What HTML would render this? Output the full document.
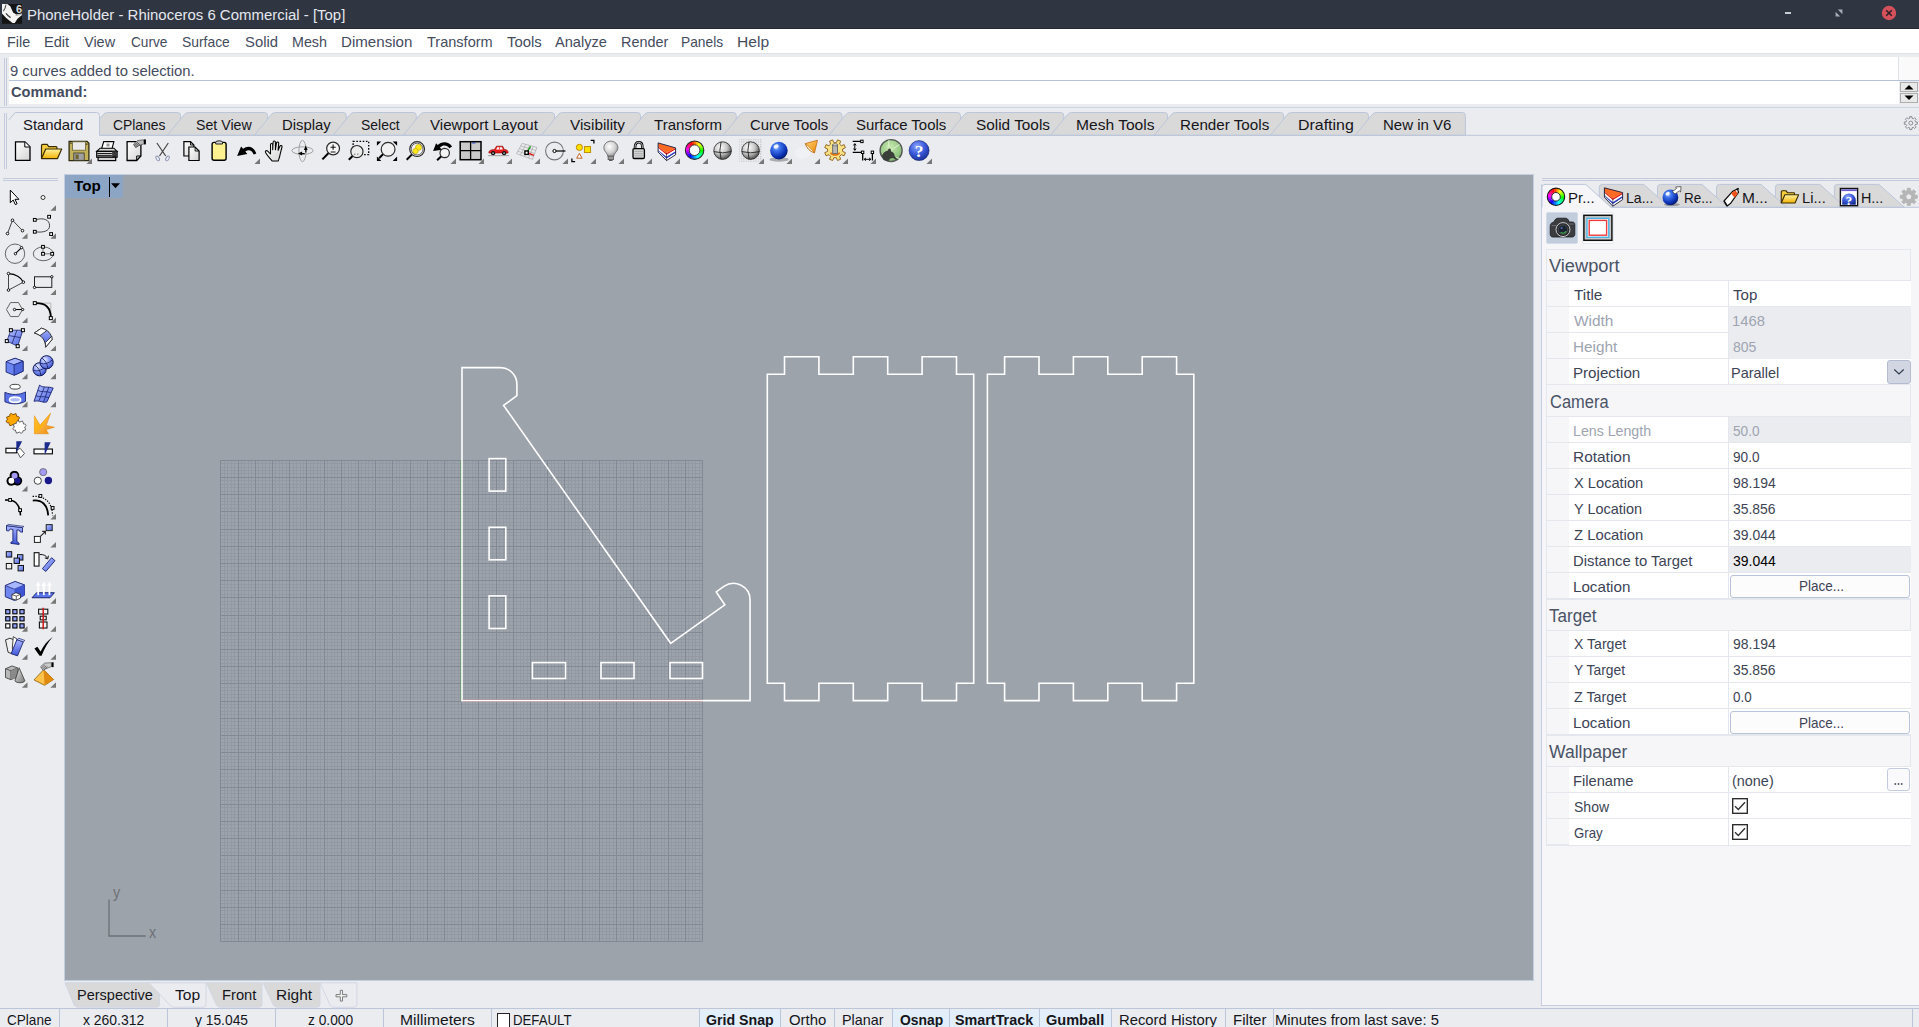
<!DOCTYPE html>
<html><head><meta charset="utf-8"><title>PhoneHolder - Rhinoceros 6 Commercial - [Top]</title>
<style>
*{margin:0;padding:0;box-sizing:border-box}
html,body{width:1919px;height:1027px;overflow:hidden;background:#ebecf0;font-family:"Liberation Sans",sans-serif;}
.a{position:absolute}
.t{position:absolute;white-space:pre;transform-origin:0 0;line-height:1;}
svg{position:absolute;overflow:visible}
</style></head>
<body>
<!-- chrome -->
<div class="a" style="left:0px;top:0px;width:1919px;height:29px;background:#2f3541;"></div>
<div class="a" style="left:0px;top:28px;width:1919px;height:1px;background:#232834;"></div>
<div class="a" style="left:1785px;top:12px;width:6px;height:2px;background:#c9ccd3;"></div>
<svg style="left:1835px;top:9px" width="8" height="8" viewBox="0 0 8 8"><path d="M2.8 0.6H7.4V5.2Z M0.6 2.8V7.4H5.2Z" fill="#a9adb6"/></svg>
<svg style="left:1881px;top:5px" width="16" height="16" viewBox="0 0 16 16"><circle cx="8" cy="8" r="7.2" fill="#d4515c"/><path d="M5.2 5.2L10.8 10.8M10.8 5.2L5.2 10.8" stroke="#2a1d26" stroke-width="1.5" fill="none"/></svg>
<svg style="left:2px;top:4px" width="20" height="20" viewBox="0 0 20 20"><rect width="20" height="19.8" fill="#141414"/><path d="M0 0H5.2L8.3 2.2L11.1 8.4L14.2 10.6L20 9.5V10.9L15.5 14.7L12.7 19.1H10.5L4.2 14.1L0 9.6Z" fill="#f4f4f4"/><path d="M4 0.6C3.6 3.4 2.6 5.6 1.4 7.2" stroke="#555" stroke-width="1.1" fill="none"/><path d="M4 9.4C5.4 11.4 7.2 12.8 8.6 13.6" stroke="#444" stroke-width="1.3" fill="none"/><path d="M13.6 11.6L19.8 10.2" stroke="#999" stroke-width="0.8"/><text x="13.9" y="9.3" font-size="11" font-weight="700" fill="#dcdcdc" font-family="Liberation Sans, sans-serif">6</text></svg>
<div class="a" style="left:0px;top:29px;width:1919px;height:24px;background:#fff;"></div>
<div class="a" style="left:0px;top:53px;width:1919px;height:1px;background:#dfe2e7;"></div>
<div class="a" style="left:4px;top:58px;width:1px;height:48px;background:#c3cbdd;"></div>
<div class="a" style="left:6px;top:58px;width:1px;height:48px;background:#c3cbdd;"></div>
<div class="a" style="left:9px;top:57px;width:1890px;height:23px;background:#fff;"></div>
<div class="a" style="left:1899px;top:57px;width:20px;height:23px;background:#fafafb;"></div>
<div class="a" style="left:1898px;top:57px;width:1px;height:23px;background:#dfe2ea;"></div>
<div class="a" style="left:9px;top:80px;width:1910px;height:1px;background:#b7c1d9;"></div>
<div class="a" style="left:9px;top:81px;width:1890px;height:23px;background:#fff;"></div>
<svg style="left:1900px;top:82px" width="18" height="10" viewBox="0 0 18 10"><rect x="0.5" y="0.5" width="17" height="9" fill="#e9e9e9" stroke="#adadad"/><path d="M4.5 7.5L9 3L13.5 7.5Z" fill="#000"/></svg>
<svg style="left:1900px;top:93px" width="18" height="10" viewBox="0 0 18 10"><rect x="0.5" y="0.5" width="17" height="9" fill="#e9e9e9" stroke="#adadad"/><path d="M4.5 2.5L9 7L13.5 2.5Z" fill="#000"/></svg>
<div class="a" style="left:0px;top:107px;width:1919px;height:1px;background:#cdd4e4;"></div>
<svg style="left:0;top:0" width="1919" height="170" viewBox="0 0 1919 170" fill="none"><path d="M86.30 135.30 L103.00 114.90 Q104.80 112.50 107.50 112.50 L177.60 112.50 Q180.60 112.50 180.60 115.50 L180.60 135.30 Z" fill="#d9d9d9" stroke="#bcc6db" stroke-width="1"/><path d="M167.40 135.30 L184.10 114.90 Q185.90 112.50 188.60 112.50 L264.50 112.50 Q267.50 112.50 267.50 115.50 L267.50 135.30 Z" fill="#d9d9d9" stroke="#bcc6db" stroke-width="1"/><path d="M254.30 135.30 L271.00 114.90 Q272.80 112.50 275.50 112.50 L343.25 112.50 Q346.25 112.50 346.25 115.50 L346.25 135.30 Z" fill="#d9d9d9" stroke="#bcc6db" stroke-width="1"/><path d="M333.05 135.30 L349.75 114.90 Q351.55 112.50 354.25 112.50 L413.25 112.50 Q416.25 112.50 416.25 115.50 L416.25 135.30 Z" fill="#d9d9d9" stroke="#bcc6db" stroke-width="1"/><path d="M403.05 135.30 L419.75 114.90 Q421.55 112.50 424.25 112.50 L551.50 112.50 Q554.50 112.50 554.50 115.50 L554.50 135.30 Z" fill="#d9d9d9" stroke="#bcc6db" stroke-width="1"/><path d="M541.30 135.30 L558.00 114.90 Q559.80 112.50 562.50 112.50 L637.50 112.50 Q640.50 112.50 640.50 115.50 L640.50 135.30 Z" fill="#d9d9d9" stroke="#bcc6db" stroke-width="1"/><path d="M627.30 135.30 L644.00 114.90 Q645.80 112.50 648.50 112.50 L733.25 112.50 Q736.25 112.50 736.25 115.50 L736.25 135.30 Z" fill="#d9d9d9" stroke="#bcc6db" stroke-width="1"/><path d="M723.05 135.30 L739.75 114.90 Q741.55 112.50 744.25 112.50 L839.00 112.50 Q842.00 112.50 842.00 115.50 L842.00 135.30 Z" fill="#d9d9d9" stroke="#bcc6db" stroke-width="1"/><path d="M828.80 135.30 L845.50 114.90 Q847.30 112.50 850.00 112.50 L957.50 112.50 Q960.50 112.50 960.50 115.50 L960.50 135.30 Z" fill="#d9d9d9" stroke="#bcc6db" stroke-width="1"/><path d="M947.30 135.30 L964.00 114.90 Q965.80 112.50 968.50 112.50 L1060.75 112.50 Q1063.75 112.50 1063.75 115.50 L1063.75 135.30 Z" fill="#d9d9d9" stroke="#bcc6db" stroke-width="1"/><path d="M1050.55 135.30 L1067.25 114.90 Q1069.05 112.50 1071.75 112.50 L1164.50 112.50 Q1167.50 112.50 1167.50 115.50 L1167.50 135.30 Z" fill="#d9d9d9" stroke="#bcc6db" stroke-width="1"/><path d="M1154.30 135.30 L1171.00 114.90 Q1172.80 112.50 1175.50 112.50 L1280.60 112.50 Q1283.60 112.50 1283.60 115.50 L1283.60 135.30 Z" fill="#d9d9d9" stroke="#bcc6db" stroke-width="1"/><path d="M1270.40 135.30 L1287.10 114.90 Q1288.90 112.50 1291.60 112.50 L1365.40 112.50 Q1368.40 112.50 1368.40 115.50 L1368.40 135.30 Z" fill="#d9d9d9" stroke="#bcc6db" stroke-width="1"/><path d="M1355.20 135.30 L1371.90 114.90 Q1373.70 112.50 1376.40 112.50 L1462.40 112.50 Q1465.40 112.50 1465.40 115.50 L1465.40 135.30 Z" fill="#d9d9d9" stroke="#bcc6db" stroke-width="1"/><path d="M99.5 135.30 H1919" stroke="#bcc6db"/><path d="M9 119.8 L15.2 112.50 H96.5 Q99.5 112.50 99.5 115.50 V135.90 H9Z" fill="#ebecf0"/><path d="M9 119.8 L15.2 112.50 H96.5 Q99.5 112.50 99.5 115.50 V135.30" stroke="#bcc6db"/><path d="M4.5 113V169M6.5 113V169" stroke="#c3cbdd"/><path d="M1917.30 121.97L1917.30 124.23L1915.55 124.24L1914.96 125.65L1916.20 126.90L1914.60 128.50L1913.35 127.26L1911.94 127.85L1911.93 129.60L1909.67 129.60L1909.66 127.85L1908.25 127.26L1907.00 128.50L1905.40 126.90L1906.64 125.65L1906.05 124.24L1904.30 124.23L1904.30 121.97L1906.05 121.96L1906.64 120.55L1905.40 119.30L1907.00 117.70L1908.25 118.94L1909.66 118.35L1909.67 116.60L1911.93 116.60L1911.94 118.35L1913.35 118.94L1914.60 117.70L1916.20 119.30L1914.96 120.55L1915.55 121.96Z" fill="none" stroke="#8a8e96" stroke-width="1" stroke-linejoin="round"/><circle cx="1910.80" cy="123.10" r="1.98" fill="none" stroke="#8a8e96"/></svg>
<div class="a" style="left:3px;top:178px;width:55px;height:1px;background:#c3cbdd;"></div>
<div class="a" style="left:3px;top:180px;width:55px;height:1px;background:#c3cbdd;"></div>
<svg style="left:0;top:0" width="1919" height="1027" viewBox="0 0 1919 1027" fill="none"><path d="M65.00 982.80 L74.00 1004.70 Q75.50 1007.20 78.00 1007.20 H156.50 Q159.50 1007.20 159.50 1004.20 V982.80 Z" fill="#d9d9d9" stroke="#d2d7e4"/><path d="M206.40 982.80 L216.30 1004.70 Q217.80 1007.20 220.30 1007.20 H259.00 Q262.00 1007.20 262.00 1004.20 V982.80 Z" fill="#d9d9d9" stroke="#d2d7e4"/><path d="M263.00 982.80 L273.20 1004.70 Q274.70 1007.20 277.20 1007.20 H317.00 Q320.00 1007.20 320.00 1004.20 V982.80 Z" fill="#d9d9d9" stroke="#d2d7e4"/><path d="M320.00 982.80 L329.90 1004.70 Q331.40 1007.20 333.90 1007.20 H353.90 Q356.90 1007.20 356.90 1004.20 V982.80 Z" fill="#ebecf0" stroke="#d2d7e4"/><path d="M149.00 982.80 L169.50 1004.70 Q171.00 1007.20 173.50 1007.20 H203.00 Q206.00 1007.20 206.00 1004.20 V982.80 Z" fill="#ebecf0" stroke="#d2d7e4"/><path d="M336 994.6h4.3v-4.3h2.2v4.3h4.3v2.2h-4.3v4.3h-2.2v-4.3h-4.3z" stroke="#707070" stroke-width="0.9" fill="#f6f6f6"/></svg>
<div class="a" style="left:0px;top:1008px;width:1919px;height:1px;background:#bcc6db;"></div>
<div class="a" style="left:699.5px;top:1009.5px;width:80.5px;height:18px;background:#e2eefa;"></div>
<div class="a" style="left:892px;top:1009.5px;width:57.5px;height:18px;background:#e2eefa;"></div>
<div class="a" style="left:949.5px;top:1009.5px;width:90px;height:18px;background:#e2eefa;"></div>
<div class="a" style="left:1039.5px;top:1009.5px;width:71.75px;height:18px;background:#e2eefa;"></div>
<div class="a" style="left:59.3px;top:1009px;width:1px;height:18px;background:#bcc6db;"></div>
<div class="a" style="left:166.9px;top:1009px;width:1px;height:18px;background:#bcc6db;"></div>
<div class="a" style="left:274.6px;top:1009px;width:1px;height:18px;background:#bcc6db;"></div>
<div class="a" style="left:382.6px;top:1009px;width:1px;height:18px;background:#bcc6db;"></div>
<div class="a" style="left:490.75px;top:1009px;width:1px;height:18px;background:#bcc6db;"></div>
<div class="a" style="left:699px;top:1009px;width:1px;height:18px;background:#bcc6db;"></div>
<div class="a" style="left:779.5px;top:1009px;width:1px;height:18px;background:#bcc6db;"></div>
<div class="a" style="left:833.7px;top:1009px;width:1px;height:18px;background:#bcc6db;"></div>
<div class="a" style="left:891.5px;top:1009px;width:1px;height:18px;background:#bcc6db;"></div>
<div class="a" style="left:949px;top:1009px;width:1px;height:18px;background:#bcc6db;"></div>
<div class="a" style="left:1039px;top:1009px;width:1px;height:18px;background:#bcc6db;"></div>
<div class="a" style="left:1110.75px;top:1009px;width:1px;height:18px;background:#bcc6db;"></div>
<div class="a" style="left:1224.5px;top:1009px;width:1px;height:18px;background:#bcc6db;"></div>
<div class="a" style="left:1273.25px;top:1009px;width:1px;height:18px;background:#bcc6db;"></div>
<div class="a" style="left:1912px;top:1009px;width:1px;height:18px;background:#bcc6db;"></div>
<div class="a" style="left:496.5px;top:1013px;width:13px;height:14px;background:#fff;border:1px solid #222;border-bottom:none"></div>
<!-- viewport -->
<div class="a" style="left:64px;top:174px;width:1470px;height:807px;background:#c4cee1;"></div>
<div class="a" style="left:65px;top:175px;width:1468px;height:805px;background:#9da3ab;"></div>
<svg style="left:0;top:0" width="1919" height="1027" viewBox="0 0 1919 1027" fill="none"><path d="M224.50 460.20V941.80M220.90 463.50H702.60M227.50 460.20V941.80M220.90 467.50H702.60M231.50 460.20V941.80M220.90 470.50H702.60M234.50 460.20V941.80M220.90 473.50H702.60M241.50 460.20V941.80M220.90 480.50H702.60M244.50 460.20V941.80M220.90 484.50H702.60M248.50 460.20V941.80M220.90 487.50H702.60M251.50 460.20V941.80M220.90 491.50H702.60M258.50 460.20V941.80M220.90 498.50H702.60M262.50 460.20V941.80M220.90 501.50H702.60M265.50 460.20V941.80M220.90 504.50H702.60M269.50 460.20V941.80M220.90 508.50H702.60M275.50 460.20V941.80M220.90 515.50H702.60M279.50 460.20V941.80M220.90 518.50H702.60M282.50 460.20V941.80M220.90 522.50H702.60M286.50 460.20V941.80M220.90 525.50H702.60M293.50 460.20V941.80M220.90 532.50H702.60M296.50 460.20V941.80M220.90 535.50H702.60M300.50 460.20V941.80M220.90 539.50H702.60M303.50 460.20V941.80M220.90 542.50H702.60M310.50 460.20V941.80M220.90 549.50H702.60M313.50 460.20V941.80M220.90 553.50H702.60M317.50 460.20V941.80M220.90 556.50H702.60M320.50 460.20V941.80M220.90 559.50H702.60M327.50 460.20V941.80M220.90 566.50H702.60M331.50 460.20V941.80M220.90 570.50H702.60M334.50 460.20V941.80M220.90 573.50H702.60M337.50 460.20V941.80M220.90 577.50H702.60M344.50 460.20V941.80M220.90 584.50H702.60M348.50 460.20V941.80M220.90 587.50H702.60M351.50 460.20V941.80M220.90 590.50H702.60M355.50 460.20V941.80M220.90 594.50H702.60M361.50 460.20V941.80M220.90 601.50H702.60M365.50 460.20V941.80M220.90 604.50H702.60M368.50 460.20V941.80M220.90 608.50H702.60M372.50 460.20V941.80M220.90 611.50H702.60M379.50 460.20V941.80M220.90 618.50H702.60M382.50 460.20V941.80M220.90 621.50H702.60M386.50 460.20V941.80M220.90 625.50H702.60M389.50 460.20V941.80M220.90 628.50H702.60M396.50 460.20V941.80M220.90 635.50H702.60M399.50 460.20V941.80M220.90 639.50H702.60M403.50 460.20V941.80M220.90 642.50H702.60M406.50 460.20V941.80M220.90 645.50H702.60M413.50 460.20V941.80M220.90 652.50H702.60M417.50 460.20V941.80M220.90 656.50H702.60M420.50 460.20V941.80M220.90 659.50H702.60M423.50 460.20V941.80M220.90 663.50H702.60M430.50 460.20V941.80M220.90 670.50H702.60M434.50 460.20V941.80M220.90 673.50H702.60M437.50 460.20V941.80M220.90 676.50H702.60M441.50 460.20V941.80M220.90 680.50H702.60M447.50 460.20V941.80M220.90 687.50H702.60M451.50 460.20V941.80M220.90 690.50H702.60M454.50 460.20V941.80M220.90 694.50H702.60M458.50 460.20V941.80M220.90 697.50H702.60M465.50 460.20V941.80M220.90 704.50H702.60M468.50 460.20V941.80M220.90 707.50H702.60M472.50 460.20V941.80M220.90 711.50H702.60M475.50 460.20V941.80M220.90 714.50H702.60M482.50 460.20V941.80M220.90 721.50H702.60M485.50 460.20V941.80M220.90 725.50H702.60M489.50 460.20V941.80M220.90 728.50H702.60M492.50 460.20V941.80M220.90 731.50H702.60M499.50 460.20V941.80M220.90 738.50H702.60M503.50 460.20V941.80M220.90 742.50H702.60M506.50 460.20V941.80M220.90 745.50H702.60M509.50 460.20V941.80M220.90 749.50H702.60M516.50 460.20V941.80M220.90 756.50H702.60M520.50 460.20V941.80M220.90 759.50H702.60M523.50 460.20V941.80M220.90 762.50H702.60M527.50 460.20V941.80M220.90 766.50H702.60M534.50 460.20V941.80M220.90 773.50H702.60M537.50 460.20V941.80M220.90 776.50H702.60M540.50 460.20V941.80M220.90 780.50H702.60M544.50 460.20V941.80M220.90 783.50H702.60M551.50 460.20V941.80M220.90 790.50H702.60M554.50 460.20V941.80M220.90 793.50H702.60M558.50 460.20V941.80M220.90 797.50H702.60M561.50 460.20V941.80M220.90 800.50H702.60M568.50 460.20V941.80M220.90 807.50H702.60M571.50 460.20V941.80M220.90 811.50H702.60M575.50 460.20V941.80M220.90 814.50H702.60M578.50 460.20V941.80M220.90 817.50H702.60M585.50 460.20V941.80M220.90 824.50H702.60M589.50 460.20V941.80M220.90 828.50H702.60M592.50 460.20V941.80M220.90 831.50H702.60M595.50 460.20V941.80M220.90 835.50H702.60M602.50 460.20V941.80M220.90 842.50H702.60M606.50 460.20V941.80M220.90 845.50H702.60M609.50 460.20V941.80M220.90 848.50H702.60M613.50 460.20V941.80M220.90 852.50H702.60M620.50 460.20V941.80M220.90 859.50H702.60M623.50 460.20V941.80M220.90 862.50H702.60M626.50 460.20V941.80M220.90 866.50H702.60M630.50 460.20V941.80M220.90 869.50H702.60M637.50 460.20V941.80M220.90 876.50H702.60M640.50 460.20V941.80M220.90 879.50H702.60M644.50 460.20V941.80M220.90 883.50H702.60M647.50 460.20V941.80M220.90 886.50H702.60M654.50 460.20V941.80M220.90 893.50H702.60M657.50 460.20V941.80M220.90 897.50H702.60M661.50 460.20V941.80M220.90 900.50H702.60M664.50 460.20V941.80M220.90 903.50H702.60M671.50 460.20V941.80M220.90 910.50H702.60M675.50 460.20V941.80M220.90 914.50H702.60M678.50 460.20V941.80M220.90 917.50H702.60M681.50 460.20V941.80M220.90 921.50H702.60M688.50 460.20V941.80M220.90 928.50H702.60M692.50 460.20V941.80M220.90 931.50H702.60M695.50 460.20V941.80M220.90 934.50H702.60M699.50 460.20V941.80M220.90 938.50H702.60" stroke="#9399a3" stroke-width="1"/><path d="M220.50 460.20V941.80M220.90 460.50H702.60M238.50 460.20V941.80M220.90 477.50H702.60M255.50 460.20V941.80M220.90 494.50H702.60M272.50 460.20V941.80M220.90 511.50H702.60M289.50 460.20V941.80M220.90 529.50H702.60M306.50 460.20V941.80M220.90 546.50H702.60M324.50 460.20V941.80M220.90 563.50H702.60M341.50 460.20V941.80M220.90 580.50H702.60M358.50 460.20V941.80M220.90 597.50H702.60M375.50 460.20V941.80M220.90 615.50H702.60M392.50 460.20V941.80M220.90 632.50H702.60M410.50 460.20V941.80M220.90 649.50H702.60M427.50 460.20V941.80M220.90 666.50H702.60M444.50 460.20V941.80M220.90 683.50H702.60M461.50 460.20V941.80M220.90 701.50H702.60M478.50 460.20V941.80M220.90 718.50H702.60M496.50 460.20V941.80M220.90 735.50H702.60M513.50 460.20V941.80M220.90 752.50H702.60M530.50 460.20V941.80M220.90 769.50H702.60M547.50 460.20V941.80M220.90 787.50H702.60M564.50 460.20V941.80M220.90 804.50H702.60M582.50 460.20V941.80M220.90 821.50H702.60M599.50 460.20V941.80M220.90 838.50H702.60M616.50 460.20V941.80M220.90 855.50H702.60M633.50 460.20V941.80M220.90 873.50H702.60M650.50 460.20V941.80M220.90 890.50H702.60M668.50 460.20V941.80M220.90 907.50H702.60M685.50 460.20V941.80M220.90 924.50H702.60M702.50 460.20V941.80M220.90 941.50H702.60" stroke="#828894" stroke-width="1"/><path d="M461.2 700.6V460.2" stroke="#5f9468" stroke-width="1.6"/><path d="M462 700.7H702.6" stroke="#8a5a62" stroke-width="2.4"/><path d="M462 700.6 V367.6 H500.3 A16.6 16.6 0 0 1 516.9 384.2 V395.6 L503.6 405.4 L670.7 643.3 L724.8 604.9 L716.2 591.9 L723.85 586.47 A16.6 16.6 0 0 1 750.06 600 V700.6 Z" stroke="#fff" stroke-width="1.6" stroke-linejoin="miter" fill="none"/><rect x="489.1" y="458.60" width="16.7" height="32.50" stroke="#fff" stroke-width="1.6" stroke-linejoin="miter" fill="none"/><rect x="489.1" y="527.30" width="16.7" height="32.50" stroke="#fff" stroke-width="1.6" stroke-linejoin="miter" fill="none"/><rect x="489.1" y="595.90" width="16.7" height="32.60" stroke="#fff" stroke-width="1.6" stroke-linejoin="miter" fill="none"/><rect x="532.40" y="662.6" width="33.10" height="15.9" stroke="#fff" stroke-width="1.6" stroke-linejoin="miter" fill="none"/><rect x="601.00" y="662.6" width="33.00" height="15.9" stroke="#fff" stroke-width="1.6" stroke-linejoin="miter" fill="none"/><rect x="670.00" y="662.6" width="32.50" height="15.9" stroke="#fff" stroke-width="1.6" stroke-linejoin="miter" fill="none"/><path d="M767.30 683.30V374.30 H784.50 V356.80 H818.90 V374.30 H853.30 V356.80 H887.70 V374.30 H922.10 V356.80 H956.50 V374.30 H973.70V683.30 H956.50 V700.60 H922.10 V683.30 H887.70 V700.60 H853.30 V683.30 H818.90 V700.60 H784.50 V683.30 Z" stroke="#fff" stroke-width="1.6" stroke-linejoin="miter" fill="none"/><path d="M987.40 683.30V374.30 H1004.60 V356.80 H1039.00 V374.30 H1073.40 V356.80 H1107.80 V374.30 H1142.20 V356.80 H1176.60 V374.30 H1193.80V683.30 H1176.60 V700.60 H1142.20 V683.30 H1107.80 V700.60 H1073.40 V683.30 H1039.00 V700.60 H1004.60 V683.30 Z" stroke="#fff" stroke-width="1.6" stroke-linejoin="miter" fill="none"/><path d="M109 899.4V936H145.8" stroke="#6e7176" stroke-width="1.3"/></svg>
<div class="a" style="left:65px;top:175px;width:57.8px;height:22.8px;background:#8ca5c4;border-bottom-right-radius:3px"></div>
<div class="a" style="left:109px;top:177px;width:1px;height:20px;background:#000;"></div>
<svg style="left:111px;top:183px" width="9" height="6" viewBox="0 0 9 6"><path d="M0 0.3H9L4.5 5.3Z" fill="#000"/></svg>
<!-- panel -->
<div class="a" style="left:1541.5px;top:178px;width:378px;height:1px;background:#c3cbdd;"></div>
<div class="a" style="left:1541.5px;top:180px;width:378px;height:1px;background:#c3cbdd;"></div>
<div class="a" style="left:1541.5px;top:207.3px;width:378px;height:798px;background:#f6f6f9;"></div>
<div class="a" style="left:1541px;top:184px;width:1px;height:822px;background:#c5cde0;"></div>
<div class="a" style="left:1541px;top:1005px;width:378px;height:1px;background:#c5cde0;"></div>
<svg style="left:0;top:0" width="1919" height="260" viewBox="0 0 1919 260" fill="none"><path d="M1834.40 207.30 V187.40 Q1834.40 184.40 1837.40 184.40 H1878.90 L1904.40 207.30 Z" fill="#d9d9d9" stroke="#bcc6db"/><path d="M1775.40 207.30 V187.40 Q1775.40 184.40 1778.40 184.40 H1819.90 L1845.40 207.30 Z" fill="#d9d9d9" stroke="#bcc6db"/><path d="M1716.50 207.30 V187.40 Q1716.50 184.40 1719.50 184.40 H1761.00 L1786.50 207.30 Z" fill="#d9d9d9" stroke="#bcc6db"/><path d="M1657.50 207.30 V187.40 Q1657.50 184.40 1660.50 184.40 H1702.00 L1727.50 207.30 Z" fill="#d9d9d9" stroke="#bcc6db"/><path d="M1599.30 207.30 V187.40 Q1599.30 184.40 1602.30 184.40 H1643.80 L1669.30 207.30 Z" fill="#d9d9d9" stroke="#bcc6db"/><path d="M1541.5 207.30H1919" stroke="#bcc6db"/><path d="M1542.00 207.90 V187.40 Q1542.00 184.40 1545.00 184.40 H1585.70 L1611.20 207.90 Z" fill="#f6f6f9"/><path d="M1542.00 207.30 V187.40 Q1542.00 184.40 1545.00 184.40 H1585.70 L1611.20 207.30" stroke="#bcc6db"/></svg>
<div class="a" style="left:1546px;top:211.7px;width:32.3px;height:32.3px;background:#c1ccdd;border:1px solid #d3dbe8;border-radius:2px"></div>
<div class="a" style="left:1582px;top:211.7px;width:32.3px;height:32.3px;background:#fdfdfe;border:1px solid #e3e8f1;border-radius:2px"></div>
<div class="a" style="left:1545.6px;top:249.4px;width:365.7px;height:595.6px;background:#f6f6f9;border:1px solid #e4e7ee"></div>
<div class="a" style="left:1545.6px;top:249.4px;width:365.7px;height:1px;background:#e4e7ee;"></div>
<div class="a" style="left:1568.6px;top:280px;width:342.7px;height:26.07px;background:#fff;"></div>
<div class="a" style="left:1568.6px;top:306.07px;width:342.7px;height:26.07px;background:#fff;"></div>
<div class="a" style="left:1568.6px;top:332.14px;width:342.7px;height:26.07px;background:#fff;"></div>
<div class="a" style="left:1568.6px;top:358.21px;width:342.7px;height:26.07px;background:#fff;"></div>
<div class="a" style="left:1545.6px;top:279.5px;width:365.7px;height:1px;background:#e4e7ee;"></div>
<div class="a" style="left:1545.6px;top:305.57px;width:365.7px;height:1px;background:#e4e7ee;"></div>
<div class="a" style="left:1545.6px;top:331.64px;width:365.7px;height:1px;background:#e4e7ee;"></div>
<div class="a" style="left:1545.6px;top:357.71px;width:365.7px;height:1px;background:#e4e7ee;"></div>
<div class="a" style="left:1545.6px;top:383.78px;width:365.7px;height:1px;background:#e4e7ee;"></div>
<div class="a" style="left:1728px;top:280px;width:1px;height:104.28px;background:#e4e7ee;"></div>
<div class="a" style="left:1545.6px;top:384.3px;width:365.7px;height:1px;background:#e4e7ee;"></div>
<div class="a" style="left:1568.6px;top:416.2px;width:342.7px;height:26.07px;background:#fff;"></div>
<div class="a" style="left:1568.6px;top:442.27px;width:342.7px;height:26.07px;background:#fff;"></div>
<div class="a" style="left:1568.6px;top:468.34px;width:342.7px;height:26.07px;background:#fff;"></div>
<div class="a" style="left:1568.6px;top:494.41px;width:342.7px;height:26.07px;background:#fff;"></div>
<div class="a" style="left:1568.6px;top:520.48px;width:342.7px;height:26.07px;background:#fff;"></div>
<div class="a" style="left:1568.6px;top:546.55px;width:342.7px;height:26.07px;background:#fff;"></div>
<div class="a" style="left:1568.6px;top:572.62px;width:342.7px;height:26.07px;background:#fff;"></div>
<div class="a" style="left:1545.6px;top:415.7px;width:365.7px;height:1px;background:#e4e7ee;"></div>
<div class="a" style="left:1545.6px;top:441.77px;width:365.7px;height:1px;background:#e4e7ee;"></div>
<div class="a" style="left:1545.6px;top:467.84px;width:365.7px;height:1px;background:#e4e7ee;"></div>
<div class="a" style="left:1545.6px;top:493.91px;width:365.7px;height:1px;background:#e4e7ee;"></div>
<div class="a" style="left:1545.6px;top:519.98px;width:365.7px;height:1px;background:#e4e7ee;"></div>
<div class="a" style="left:1545.6px;top:546.05px;width:365.7px;height:1px;background:#e4e7ee;"></div>
<div class="a" style="left:1545.6px;top:572.12px;width:365.7px;height:1px;background:#e4e7ee;"></div>
<div class="a" style="left:1545.6px;top:598.19px;width:365.7px;height:1px;background:#e4e7ee;"></div>
<div class="a" style="left:1728px;top:416.2px;width:1px;height:182.49px;background:#e4e7ee;"></div>
<div class="a" style="left:1545.6px;top:598.7px;width:365.7px;height:1px;background:#e4e7ee;"></div>
<div class="a" style="left:1568.6px;top:630.6px;width:342.7px;height:26.07px;background:#fff;"></div>
<div class="a" style="left:1568.6px;top:656.67px;width:342.7px;height:26.07px;background:#fff;"></div>
<div class="a" style="left:1568.6px;top:682.74px;width:342.7px;height:26.07px;background:#fff;"></div>
<div class="a" style="left:1568.6px;top:708.81px;width:342.7px;height:26.07px;background:#fff;"></div>
<div class="a" style="left:1545.6px;top:630.1px;width:365.7px;height:1px;background:#e4e7ee;"></div>
<div class="a" style="left:1545.6px;top:656.17px;width:365.7px;height:1px;background:#e4e7ee;"></div>
<div class="a" style="left:1545.6px;top:682.24px;width:365.7px;height:1px;background:#e4e7ee;"></div>
<div class="a" style="left:1545.6px;top:708.31px;width:365.7px;height:1px;background:#e4e7ee;"></div>
<div class="a" style="left:1545.6px;top:734.38px;width:365.7px;height:1px;background:#e4e7ee;"></div>
<div class="a" style="left:1728px;top:630.6px;width:1px;height:104.28px;background:#e4e7ee;"></div>
<div class="a" style="left:1545.6px;top:734.9px;width:365.7px;height:1px;background:#e4e7ee;"></div>
<div class="a" style="left:1568.6px;top:766.8px;width:342.7px;height:26.07px;background:#fff;"></div>
<div class="a" style="left:1568.6px;top:792.87px;width:342.7px;height:26.07px;background:#fff;"></div>
<div class="a" style="left:1568.6px;top:818.94px;width:342.7px;height:26.07px;background:#fff;"></div>
<div class="a" style="left:1545.6px;top:766.3px;width:365.7px;height:1px;background:#e4e7ee;"></div>
<div class="a" style="left:1545.6px;top:792.37px;width:365.7px;height:1px;background:#e4e7ee;"></div>
<div class="a" style="left:1545.6px;top:818.44px;width:365.7px;height:1px;background:#e4e7ee;"></div>
<div class="a" style="left:1545.6px;top:844.51px;width:365.7px;height:1px;background:#e4e7ee;"></div>
<div class="a" style="left:1728px;top:766.8px;width:1px;height:78.21px;background:#e4e7ee;"></div>
<div class="a" style="left:1729px;top:306.6px;width:181.8px;height:52px;background:#ebecf0;"></div>
<div class="a" style="left:1729px;top:416.7px;width:181.8px;height:25.2px;background:#ebecf0;"></div>
<div class="a" style="left:1729px;top:546.6px;width:181.8px;height:25.8px;background:#ebecf0;"></div>
<div class="a" style="left:1887.2px;top:360.4px;width:23.4px;height:23.2px;background:#d1d6e2;border:1px solid #b4bccf;border-radius:3px"></div>
<svg style="left:1893px;top:368px" width="12" height="8" viewBox="0 0 12 8"><path d="M1.3 1.5L6 6L10.7 1.5" stroke="#333a48" stroke-width="1.2" fill="none"/></svg>
<div class="a" style="left:1730.3px;top:574.5px;width:180.2px;height:23px;background:#fcfcfd;border:1px solid #b9c3da;border-radius:3px"></div>
<div class="a" style="left:1730.3px;top:710.7px;width:180.2px;height:23px;background:#fcfcfd;border:1px solid #b9c3da;border-radius:3px"></div>
<div class="a" style="left:1887.2px;top:768.3px;width:23.3px;height:23.2px;background:#fafafc;border:1px solid #c3cbdf;border-radius:3px"></div>
<svg style="left:1894px;top:783px" width="10" height="3" viewBox="0 0 10 3"><path d="M0.5 1h1.6M3.7 1h1.6M6.9 1h1.6" stroke="#333a48" stroke-width="1.6"/></svg>
<svg style="left:1732px;top:797.9px" width="16" height="16" viewBox="0 0 16 16"><rect x="0.7" y="0.7" width="14.6" height="14.6" fill="#fff" stroke="#222" stroke-width="1.3"/><path d="M3 8.3L6.3 11.5L13 4.3" stroke="#333" stroke-width="1.4" fill="none"/></svg>
<svg style="left:1732px;top:823.9px" width="16" height="16" viewBox="0 0 16 16"><rect x="0.7" y="0.7" width="14.6" height="14.6" fill="#fff" stroke="#222" stroke-width="1.3"/><path d="M3 8.3L6.3 11.5L13 4.3" stroke="#333" stroke-width="1.4" fill="none"/></svg>
<svg style="left:0;top:0" width="1919" height="260" viewBox="0 0 1919 260"><path d="M1917.27 195.32L1917.27 198.28L1914.99 198.29L1914.23 200.13L1915.84 201.75L1913.75 203.84L1912.13 202.23L1910.29 202.99L1910.28 205.27L1907.32 205.27L1907.31 202.99L1905.47 202.23L1903.85 203.84L1901.76 201.75L1903.37 200.13L1902.61 198.29L1900.33 198.28L1900.33 195.32L1902.61 195.31L1903.37 193.47L1901.76 191.85L1903.85 189.76L1905.47 191.37L1907.31 190.61L1907.32 188.33L1910.28 188.33L1910.29 190.61L1912.13 191.37L1913.75 189.76L1915.84 191.85L1914.23 193.47L1914.99 195.31Z" fill="#b5b5b5" stroke="#b5b5b5" stroke-width="1" stroke-linejoin="round"/><circle cx="1908.80" cy="196.80" r="3.00" fill="#ebecf0" stroke="#b5b5b5"/></svg>
<!-- icons -->
<svg style="left:0;top:0" width="1919" height="1027" viewBox="0 0 1919 1027" fill="none">
<defs>
<linearGradient id="gp" x1="0" y1="0" x2="1" y2="1"><stop offset="0" stop-color="#fff"/><stop offset="1" stop-color="#d4d4d4"/></linearGradient>
<linearGradient id="gf" x1="0" y1="0" x2="0" y2="1"><stop offset="0" stop-color="#fff2a0"/><stop offset="1" stop-color="#f2b200"/></linearGradient>
<linearGradient id="gb" x1="0" y1="0" x2="1" y2="1"><stop offset="0" stop-color="#b9c4ff"/><stop offset="1" stop-color="#4a63e0"/></linearGradient>
<linearGradient id="gb2" x1="0" y1="0" x2="0" y2="1"><stop offset="0" stop-color="#a9b6ff"/><stop offset="1" stop-color="#3d55d8"/></linearGradient>
<linearGradient id="go" x1="0" y1="0" x2="1" y2="1"><stop offset="0" stop-color="#ffd27a"/><stop offset="1" stop-color="#f08a00"/></linearGradient>
<radialGradient id="gs" cx="0.38" cy="0.32" r="0.75"><stop offset="0" stop-color="#fff"/><stop offset="0.5" stop-color="#c6c6c6"/><stop offset="1" stop-color="#3a3a3a"/></radialGradient>
<radialGradient id="gbs" cx="0.36" cy="0.3" r="0.8"><stop offset="0" stop-color="#cfe0ff"/><stop offset="0.25" stop-color="#3f74ee"/><stop offset="0.7" stop-color="#0a2fb0"/><stop offset="1" stop-color="#04104a"/></radialGradient>
<radialGradient id="gbl" cx="0.36" cy="0.3" r="0.8"><stop offset="0" stop-color="#e6ebff"/><stop offset="0.5" stop-color="#7d90f2"/><stop offset="1" stop-color="#2f43b8"/></radialGradient>
<radialGradient id="gbulb" cx="0.4" cy="0.35" r="0.7"><stop offset="0" stop-color="#fff"/><stop offset="0.6" stop-color="#d0d0d0"/><stop offset="1" stop-color="#8a8a8a"/></radialGradient>
<radialGradient id="ghelp" cx="0.4" cy="0.3" r="0.8"><stop offset="0" stop-color="#8fa6ff"/><stop offset="0.5" stop-color="#3858d8"/><stop offset="1" stop-color="#14288a"/></radialGradient>
<radialGradient id="ggh" cx="0.45" cy="0.35" r="0.8"><stop offset="0" stop-color="#c8eab2"/><stop offset="0.7" stop-color="#8cc07a"/><stop offset="1" stop-color="#4a5a48"/></radialGradient>
<linearGradient id="ggray" x1="0" y1="0" x2="1" y2="1"><stop offset="0" stop-color="#e8e8e8"/><stop offset="1" stop-color="#777"/></linearGradient>
<pattern id="dots" width="2.4" height="2.4" patternUnits="userSpaceOnUse"><rect width="1.2" height="1.2" fill="#c2c2c6"/></pattern>
</defs>
<g transform="translate(10.50 139.00)"><path d="M5 2.8H14.5L19.5 7.8V21.3H5Z" fill="url(#gp)" stroke="#000" stroke-width="1.3"/><path d="M14.3 3V8H19.3" stroke="#000" stroke-width="1" fill="#fff"/></g>
<g transform="translate(38.50 139.00)"><path d="M3 19.3V6.6Q3 5.4 4.2 5.4H8.6L10.2 7.6H17.6Q18.4 7.6 18.4 8.6V10.2" fill="#f5cc3c" stroke="#3a2c00" stroke-width="1.2"/><path d="M3 19.6L7.2 10H23.2L19 19.6Z" fill="url(#gf)" stroke="#3a2c00" stroke-width="1.2" stroke-linejoin="round"/></g>
<g transform="translate(66.50 139.00)"><path d="M2.6 2.4H20.6L22.4 4.2V21.6H2.6Z" fill="#c2b15a" stroke="#2f2a10" stroke-width="1.3"/><rect x="6" y="2.8" width="13" height="8.4" fill="#e9e9e9" stroke="#6a6235" stroke-width="0.8"/><rect x="7.3" y="14" width="10.4" height="7.3" fill="#a0a0a0" stroke="#3c3820" stroke-width="0.8"/><rect x="9" y="15.5" width="3.2" height="4.6" fill="#6e6432"/><rect x="3.6" y="3.4" width="1.6" height="1.6" fill="#5c5428"/><rect x="19.4" y="4.4" width="1.6" height="1.6" fill="#5c5428"/></g>
<path d="M92.00 158.50 L92.00 164.10 L86.40 164.10 Z" fill="#777"/>
<g transform="translate(94.50 139.00)"><path d="M7 10L9.2 2.6H19.4L17.4 10Z" fill="#fff" stroke="#000" stroke-width="1.1"/><rect x="12" y="4.5" width="3" height="3" fill="#999"/><path d="M2.2 12.4L5.6 9.2H19.4L22.6 12.4Z" fill="#d8d8d8" stroke="#000" stroke-width="1.1"/><rect x="2.2" y="12.4" width="20.4" height="5.8" fill="#f0f0f0" stroke="#000" stroke-width="1.2"/><path d="M17.6 12.4H22.6V18.2H17.6Z" fill="#3a3a3a"/><path d="M2.8 14.4H17.4M2.8 16.3H17.4" stroke="#000" stroke-width="1"/><rect x="3.6" y="18.2" width="17.6" height="3.4" fill="#cfcfcf" stroke="#000" stroke-width="1.2"/></g>
<g transform="translate(122.50 139.00)"><path d="M4.6 2.6H18.4V17L14.2 21.5H4.6Z" fill="url(#gp)" stroke="#000" stroke-width="1.3"/><path d="M14.2 21.3V17H18.2" stroke="#000" stroke-width="1"/><path d="M11 5.2L15 1.6L21 0.8L22 4.6L16 6.8L13 8.6Z" fill="#bbb" stroke="#555" stroke-width="0.8"/><path d="M11.5 6.5L15.5 3M12.5 7.5L16.5 4M13.8 8.2L17.5 5" stroke="#444" stroke-width="0.8"/><rect x="21.4" y="0.4" width="2" height="5" fill="#000"/></g>
<g transform="translate(150.50 139.00)"><path d="M6.4 4L15.2 17M17.8 4L9 17" stroke="#444" stroke-width="1.2"/><ellipse cx="7.2" cy="19.4" rx="1.5" ry="2.6" transform="rotate(-28 7.2 19.4)" stroke="#8791b0" stroke-width="0.9"/><ellipse cx="17" cy="19.4" rx="1.5" ry="2.6" transform="rotate(28 17 19.4)" stroke="#8791b0" stroke-width="0.9"/></g>
<g transform="translate(178.50 139.00)"><path d="M5.4 2.6H12L15.4 6V17H5.4Z" fill="url(#gp)" stroke="#000" stroke-width="1.2"/><path d="M12 2.8V6H15.2" stroke="#000" stroke-width="0.9"/><path d="M10.4 8H16.6L20.6 12V21.5H10.4Z" fill="url(#gp)" stroke="#000" stroke-width="1.2"/><path d="M16.6 8.2V12H20.4" stroke="#000" stroke-width="0.9"/></g>
<g transform="translate(206.50 139.00)"><rect x="5.6" y="3.4" width="14" height="17.8" rx="2" fill="#fdf190" stroke="#000" stroke-width="1.4"/><path d="M9.2 3.4Q9.2 1.8 12.6 1.8Q16 1.8 16 3.4V5H9.2Z" fill="#d0d0d0" stroke="#222" stroke-width="1"/></g>
<g transform="translate(234.50 139.00)"><path d="M21.8 14.6C19.6 7.6 13.2 6 8.6 9.8L6.6 7.4L2.6 17L12.8 15L10.8 12.6C14 10.2 17.4 11 19.2 15.6Z" fill="#000"/></g>
<path d="M260.00 158.50 L260.00 164.10 L254.40 164.10 Z" fill="#777"/>
<g transform="translate(262.50 139.00)"><path d="M9.6 22C7.6 19.4 4.4 16 3 13.4C2.4 12 4 11 5.2 12.2L8 15V5.6C8 4 10.2 4 10.2 5.6V10.8L10.6 3.2C10.7 1.6 12.9 1.7 12.9 3.3V10.8L14 4C14.2 2.5 16.4 2.8 16.2 4.3L15.6 11.4L17.4 7.2C18 5.8 19.9 6.6 19.5 8L17.6 15.4C17.2 18.4 16.2 20 15.8 22Z" fill="url(#gp)" stroke="#000" stroke-width="1.05" stroke-linejoin="round"/></g>
<g transform="translate(290.50 139.00)"><ellipse cx="12" cy="11.6" rx="10.6" ry="3.8" stroke="#9a9a9a" stroke-width="0.9"/><ellipse cx="12" cy="12" rx="3.6" ry="10.6" stroke="#9a9a9a" stroke-width="0.9"/><path d="M15.2 6.6L17.2 11H13.4Z" fill="#000"/><path d="M15.3 10.5V13.5" stroke="#000" stroke-width="1.2"/><path d="M7.4 14.6L11.6 12.6V16.6Z" fill="#000"/><path d="M11 14.6H14.2" stroke="#000" stroke-width="1.2"/></g>
<g transform="translate(318.50 139.00)"><path d="M10.12 14.07L3.90 20.40" stroke="#000" stroke-width="2" stroke-linecap="butt"/><circle cx="14.60" cy="9.50" r="6.40" fill="#f6f6f6" stroke="#2a2a2a" stroke-width="1.2"/><path d="M12 8.2H17.2M14.6 5.6V10.8M12.2 13H17" stroke="#111" stroke-width="1.1"/></g>
<g transform="translate(346.50 139.00)"><rect x="6.6" y="2.3" width="15.6" height="13.4" stroke="#000" stroke-width="1.3" stroke-dasharray="1.6 1.6"/><path d="M6.11 16.94L2.30 20.80" stroke="#000" stroke-width="2" stroke-linecap="butt"/><circle cx="10.40" cy="12.60" r="6.10" fill="#ececec" stroke="#2a2a2a" stroke-width="1.2"/><path d="M7.5 15.2H9M10.5 15.2H12" stroke="#555" stroke-width="0.8"/></g>
<g transform="translate(374.50 139.00)"><path d="M8.72 15.08L4.60 19.20" stroke="#000" stroke-width="2" stroke-linecap="butt"/><circle cx="13.60" cy="10.20" r="6.90" fill="#f2f2f2" stroke="#2a2a2a" stroke-width="1.2"/><path d="M2.4 2.4H6.8L2.4 6.8ZM22.6 2.4V6.8L18.2 2.4ZM2.4 22V17.6L6.8 22ZM22.6 22H18.2L22.6 17.6Z" fill="#000"/></g>
<g transform="translate(402.50 139.00)"><path d="M9.44 15.41L4.20 20.80" stroke="#000" stroke-width="2" stroke-linecap="butt"/><circle cx="14.60" cy="10.10" r="7.40" fill="#f2f2f2" stroke="#2a2a2a" stroke-width="1.2"/><circle cx="14.6" cy="10.1" r="5.9" stroke="#444" stroke-width="0.8"/><circle cx="16" cy="8.4" r="3" fill="#ffe81a" stroke="#b9a400" stroke-width="0.6"/><circle cx="13" cy="12" r="2.7" fill="#ffe81a" stroke="#b9a400" stroke-width="0.6"/></g>
<g transform="translate(430.50 139.00)"><path d="M21.6 7.4C17.8 1.6 10.4 2.4 7.2 6L5.6 4.2L2.6 12L11.4 10.8L9.4 8.6C12.4 5.6 16.8 6 18.8 9.2Z" fill="#000"/><path d="M10.79 17.23L6.60 21.20" stroke="#000" stroke-width="2" stroke-linecap="butt"/><circle cx="14.20" cy="14.00" r="4.70" fill="#f4f4f4" stroke="#2a2a2a" stroke-width="1.2"/></g>
<path d="M456.00 158.50 L456.00 164.10 L450.40 164.10 Z" fill="#777"/>
<g transform="translate(458.50 139.00)"><rect x="1.7" y="2.7" width="20.8" height="18" fill="#c9c9c9" stroke="#000" stroke-width="1.5"/><path d="M12.1 2.7V20.7M1.7 11.7H22.5" stroke="#000" stroke-width="1.3"/><rect x="13.6" y="3.5" width="3.4" height="0.9" fill="#1030c0"/></g>
<path d="M484.00 158.50 L484.00 164.10 L478.40 164.10 Z" fill="#777"/>
<g transform="translate(486.50 139.00)"><path d="M1.4 16.6H22.6" stroke="#9a9a9a" stroke-width="0.9"/><path d="M2.4 13.8C2.2 11.4 4.6 10.8 8 10.4L10 7.2H16.2L17.8 10.4C20.4 10.6 21.8 11.6 21.6 14H2.4Z" fill="#e81c1c" stroke="#8a0000" stroke-width="0.6"/><path d="M10.8 8.2H15.4L16.4 10.4H9.6Z" fill="#fff"/><path d="M13 8.2V10.4" stroke="#e81c1c" stroke-width="0.8"/><circle cx="6.6" cy="14.2" r="2.1" fill="#111"/><circle cx="6.6" cy="14.2" r="0.9" fill="#aaa"/><circle cx="17.6" cy="14.2" r="2.1" fill="#111"/><circle cx="17.6" cy="14.2" r="0.9" fill="#aaa"/></g>
<path d="M512.00 158.50 L512.00 164.10 L506.40 164.10 Z" fill="#777"/>
<g transform="translate(514.50 139.00)"><path d="M7.6 4.4L22.4 8.4L18 20.4L2 14.6ZM11.3 5.4L6 16M15 6.4L10 17.5M18.7 7.4L14 19M6.2 7L21.3 11.4M4.8 9.6L20.2 14.4M3.4 12.2L19.1 17.4" stroke="#b0b0b0" stroke-width="0.8"/><path d="M13 12.6L16 7.4" stroke="#0a9a0a" stroke-width="1.3"/><path d="M14 14.2L19.4 16.4" stroke="#e01010" stroke-width="1.3"/><rect x="10.4" y="12" width="3.4" height="3.4" fill="#fff" stroke="#000" stroke-width="1.4"/></g>
<path d="M540.00 158.50 L540.00 164.10 L534.40 164.10 Z" fill="#777"/>
<g transform="translate(542.50 139.00)"><circle cx="12" cy="12" r="8.9" stroke="#777" stroke-width="1.1"/><path d="M13.4 12H23" stroke="#000" stroke-width="1.2"/><circle cx="12" cy="12" r="1.6" fill="#fff" stroke="#000" stroke-width="1"/></g>
<path d="M568.00 158.50 L568.00 164.10 L562.40 164.10 Z" fill="#777"/>
<g transform="translate(570.50 139.00)"><circle cx="8.9" cy="8.4" r="3.1" fill="#ffe100" stroke="#b98600" stroke-width="0.9"/><rect x="13.9" y="7.6" width="6.2" height="5.9" fill="#ffe100" stroke="#b98600" stroke-width="0.9"/><path d="M6.2 19.2L8.9 14.4L11.6 19.2Z" fill="#fff" stroke="#c0601c" stroke-width="1"/><path d="M20.2 1.4H23.4V4.6M1.4 19.4V22.6H4.6" stroke="#000" stroke-width="1.3"/></g>
<path d="M596.00 158.50 L596.00 164.10 L590.40 164.10 Z" fill="#777"/>
<g transform="translate(598.50 139.00)"><path d="M12.3 2.2C8.2 2.2 5.4 5.2 5.4 8.8C5.4 11.6 7.6 13.2 8.8 15.4L9.4 17.4H15.2L15.8 15.4C17 13.2 19.4 11.6 19.4 8.8C19.4 5.2 16.4 2.2 12.3 2.2Z" fill="url(#gbulb)" stroke="#6a6a6a" stroke-width="0.9"/><rect x="9.6" y="17.2" width="5.4" height="3.4" fill="#9a9a9a" stroke="#555" stroke-width="0.8"/><path d="M10.6 21.4H14" stroke="#555" stroke-width="1.2"/></g>
<path d="M624.00 158.50 L624.00 164.10 L618.40 164.10 Z" fill="#777"/>
<g transform="translate(626.50 139.00)"><path d="M8.6 10V7.4C8.6 4.6 10.2 3.3 12.2 3.3C14.2 3.3 15.8 4.6 15.8 7.4V10" stroke="#000" stroke-width="2.6"/><path d="M8.6 10V7.4C8.6 4.6 10.2 3.3 12.2 3.3C14.2 3.3 15.8 4.6 15.8 7.4V10" stroke="#e0e0e0" stroke-width="0.9"/><rect x="6.5" y="9.6" width="11.4" height="9.9" rx="1.2" fill="#d4d4d4" stroke="#000" stroke-width="1.3"/><path d="M8 12.4H16.4M8 14.6H16.4M8 16.8H16.4" stroke="#a8a8a8" stroke-width="0.9"/></g>
<path d="M652.00 158.50 L652.00 164.10 L646.40 164.10 Z" fill="#777"/>
<g transform="translate(654.50 139.00)"><path d="M3.60 7.40L12.00 14.00L21.10 8.90L21.10 10.61L12.00 15.90L3.60 8.82Z" fill="#e8201c"/><path d="M3.60 9.30L12.00 15.90L21.10 10.61L21.10 12.32L12.00 17.80L3.60 10.25Z" fill="#ffffff"/><path d="M3.60 11.20L12.00 17.80L21.10 12.32L21.10 14.03L12.00 19.70L3.60 11.68Z" fill="#2a3cc0"/><path d="M3.60 13.10L12.00 19.70L21.10 14.03L21.10 15.74L12.00 21.60L3.60 13.10Z" fill="#ffffff"/><path d="M3.60 3.90L21.10 8.90L12.00 14.00L3.60 7.40Z" fill="#ff6a24"/><path d="M3.60 3.90L21.10 8.90L21.10 15.74L12.00 21.60L3.60 13.10Z" stroke="#1a1a3a" stroke-width="0.90" stroke-linejoin="round"/><path d="M12.00 14.00V21.60" stroke="#1a1a3a" stroke-width="0.6"/></g>
<path d="M680.00 158.50 L680.00 164.10 L674.40 164.10 Z" fill="#777"/>
<g transform="translate(682.50 139.00)"><path d="M11.92 2.00L14.66 2.36L13.57 6.11L11.99 5.90Z" fill="hsl(30,100%,50%)"/><path d="M14.30 2.27L16.86 3.33L14.84 6.66L13.37 6.05Z" fill="hsl(45,100%,50%)"/><path d="M16.54 3.14L18.73 4.83L15.92 7.53L14.66 6.56Z" fill="hsl(60,100%,50%)"/><path d="M18.47 4.57L20.16 6.76L16.74 8.64L15.77 7.38Z" fill="hsl(75,100%,50%)"/><path d="M19.97 6.44L21.03 9.00L17.25 9.93L16.64 8.46Z" fill="hsl(90,100%,50%)"/><path d="M20.94 8.64L21.30 11.38L17.40 11.31L17.19 9.73Z" fill="hsl(105,100%,50%)"/><path d="M21.30 11.02L20.94 13.76L17.19 12.67L17.40 11.09Z" fill="hsl(120,100%,50%)"/><path d="M21.03 13.40L19.97 15.96L16.64 13.94L17.25 12.47Z" fill="hsl(135,100%,50%)"/><path d="M20.16 15.64L18.47 17.83L15.77 15.02L16.74 13.76Z" fill="hsl(150,100%,50%)"/><path d="M18.73 17.57L16.54 19.26L14.66 15.84L15.92 14.87Z" fill="hsl(165,100%,50%)"/><path d="M16.86 19.07L14.30 20.13L13.37 16.35L14.84 15.74Z" fill="hsl(180,100%,50%)"/><path d="M14.66 20.04L11.92 20.40L11.99 16.50L13.57 16.29Z" fill="hsl(195,100%,50%)"/><path d="M12.28 20.40L9.54 20.04L10.63 16.29L12.21 16.50Z" fill="hsl(210,100%,50%)"/><path d="M9.90 20.13L7.34 19.07L9.36 15.74L10.83 16.35Z" fill="hsl(225,100%,50%)"/><path d="M7.66 19.26L5.47 17.57L8.28 14.87L9.54 15.84Z" fill="hsl(240,100%,50%)"/><path d="M5.73 17.83L4.04 15.64L7.46 13.76L8.43 15.02Z" fill="hsl(255,100%,50%)"/><path d="M4.23 15.96L3.17 13.40L6.95 12.47L7.56 13.94Z" fill="hsl(270,100%,50%)"/><path d="M3.26 13.76L2.90 11.02L6.80 11.09L7.01 12.67Z" fill="hsl(285,100%,50%)"/><path d="M2.90 11.38L3.26 8.64L7.01 9.73L6.80 11.31Z" fill="hsl(300,100%,50%)"/><path d="M3.17 9.00L4.23 6.44L7.56 8.46L6.95 9.93Z" fill="hsl(315,100%,50%)"/><path d="M4.04 6.76L5.73 4.57L8.43 7.38L7.46 8.64Z" fill="hsl(330,100%,50%)"/><path d="M5.47 4.83L7.66 3.14L9.54 6.56L8.28 7.53Z" fill="hsl(345,100%,50%)"/><path d="M7.34 3.33L9.90 2.27L10.83 6.05L9.36 6.66Z" fill="hsl(0,100%,50%)"/><path d="M9.54 2.36L12.28 2.00L12.21 5.90L10.63 6.11Z" fill="hsl(15,100%,50%)"/><circle cx="12.10" cy="11.20" r="9.20" stroke="#2a2a2a" stroke-width="1.1"/><circle cx="12.10" cy="11.20" r="5.30" fill="#fff" stroke="#2a2a2a" stroke-width="0.9"/></g>
<path d="M708.00 158.50 L708.00 164.10 L702.40 164.10 Z" fill="#777"/>
<g transform="translate(710.50 139.00)"><circle cx="12.10" cy="11.60" r="8.80" fill="url(#gs)" stroke="#222" stroke-width="0.8"/><path d="M10.60 2.80Q8.10 11.60 10.60 20.40M3.30 12.60Q12.10 15.10 20.90 12.60" stroke="#222" stroke-width="0.9"/></g>
<g transform="translate(738.50 139.00)"><rect x="0.4" y="0.2" width="23.2" height="23.4" fill="url(#dots)"/><circle cx="12.10" cy="11.60" r="8.80" fill="url(#gs)" stroke="#222" stroke-width="0.8"/><path d="M10.60 2.80Q8.10 11.60 10.60 20.40M3.30 12.60Q12.10 15.10 20.90 12.60" stroke="#222" stroke-width="0.9"/></g>
<path d="M764.00 158.50 L764.00 164.10 L758.40 164.10 Z" fill="#777"/>
<g transform="translate(766.50 139.00)"><ellipse cx="12.6" cy="20.4" rx="9.6" ry="2.4" fill="#000" opacity="0.28"/><circle cx="12.4" cy="11.6" r="8.8" fill="url(#gbs)"/><ellipse cx="9.6" cy="7.4" rx="2.6" ry="1.8" fill="#fff" opacity="0.85" transform="rotate(-30 9.6 7.4)"/></g>
<path d="M792.00 158.50 L792.00 164.10 L786.40 164.10 Z" fill="#777"/>
<g transform="translate(794.50 139.00)"><ellipse cx="8" cy="14" rx="8" ry="6" fill="#fff" opacity="0.25"/><path d="M23 1.2L10.8 4.6C12.2 9 15.4 12.4 20 13.8Z" fill="url(#go)" stroke="#b86000" stroke-width="0.7" stroke-linejoin="round"/><path d="M10.8 4.6C12.2 9 15.4 12.4 20 13.8C17.4 10.6 14.4 7.4 10.8 4.6Z" fill="#fff4da" stroke="#b86000" stroke-width="0.6"/></g>
<path d="M820.00 158.50 L820.00 164.10 L814.40 164.10 Z" fill="#777"/>
<g transform="translate(822.50 139.00)"><path d="M22.91 13.67L21.64 16.74L18.75 15.67L17.07 17.35L18.14 20.24L15.07 21.51L13.79 18.71L11.41 18.71L10.13 21.51L7.06 20.24L8.13 17.35L6.45 15.67L3.56 16.74L2.29 13.67L5.09 12.39L5.09 10.01L2.29 8.73L3.56 5.66L6.45 6.73L8.13 5.05L7.06 2.16L10.13 0.89L11.41 3.69L13.79 3.69L15.07 0.89L18.14 2.16L17.07 5.05L18.75 6.73L21.64 5.66L22.91 8.73L20.11 10.01L20.11 12.39Z" fill="#f8e287" stroke="#8a5a10" stroke-width="0.9" stroke-linejoin="round"/><path d="M8 13.6A5 4 0 0 0 17.2 13.6" stroke="#e07010" stroke-width="1.4"/><rect x="10.2" y="5.8" width="4.8" height="8.6" fill="#b8b8b8" stroke="#555" stroke-width="0.8"/><ellipse cx="12.6" cy="5.8" rx="2.4" ry="1.1" fill="#e4e4e4" stroke="#555" stroke-width="0.7"/></g>
<path d="M848.00 158.50 L848.00 164.10 L842.40 164.10 Z" fill="#777"/>
<g transform="translate(850.50 139.00)"><path d="M2.2 2.4H11M2.2 13.3H11.6M12.2 14V21.6M21.9 14V21.6" stroke="#000" stroke-width="1.3"/><path d="M4.3 5V11M3 6.4L4.3 4.6L5.6 6.4M3 9.6L4.3 11.4L5.6 9.6" stroke="#000" stroke-width="1"/><path d="M14 20.3H20M15.4 19L13.6 20.3L15.4 21.6M18.6 19L20.4 20.3L18.6 21.6" stroke="#000" stroke-width="1"/><rect x="10.20" y="1.20" width="2.40" height="2.40" fill="#fff" stroke="#000" stroke-width="1.00"/><rect x="10.90" y="12.10" width="2.40" height="2.40" fill="#fff" stroke="#000" stroke-width="1.00"/><rect x="20.70" y="12.10" width="2.40" height="2.40" fill="#fff" stroke="#000" stroke-width="1.00"/></g>
<path d="M876.00 158.50 L876.00 164.10 L870.40 164.10 Z" fill="#777"/>
<g transform="translate(878.50 139.00)"><circle cx="12.6" cy="11.6" r="11" fill="url(#ggh)" stroke="#565a56" stroke-width="1.4"/><path d="M10.5 1L9.5 9M21 5.5L11 12M4 14.5L10 15.5M13 17.5L21.5 19.5M9 22V18" stroke="#dff3d0" stroke-width="1"/><path d="M3.4 17C4.4 13.6 6.8 12.2 9 11.8L10.4 9.6L12.2 10L12.6 12.4C15.4 13 16.2 15.6 16.2 17.2L19 20.2L17.6 21L14.6 19L12 19.6L9.4 22.2L5 21Z" fill="#3a3f3a"/></g>
<g transform="translate(906.50 139.00)"><circle cx="12.6" cy="11.6" r="10" fill="url(#ghelp)" stroke="#10206a" stroke-width="0.6"/><text x="12.6" y="17.8" font-size="17.5" font-weight="700" fill="#fff" text-anchor="middle" font-family="Liberation Serif, serif">?</text></g>
<path d="M932.00 158.50 L932.00 164.10 L926.40 164.10 Z" fill="#777"/>
<g transform="translate(2.50 185.30)"><path d="M7.8 4.8V17.4L10.7 14.7L12.8 19.3L14.6 18.5L12.5 14H16.4Z" fill="#fff" stroke="#000" stroke-width="1" stroke-linejoin="round"/></g>
<g transform="translate(31.00 185.30)"><circle cx="12.00" cy="12.20" r="2.00" fill="#fff" stroke="#333" stroke-width="1.00"/></g>
<path d="M56.00 205.20 L56.00 210.80 L50.40 210.80 Z" fill="#777"/>
<g transform="translate(2.50 213.36)"><path d="M5 20.2L10 6.9L20 17.3" stroke="#333" stroke-width="0.9"/><circle cx="5.00" cy="20.20" r="1.30" fill="#fff" stroke="#000" stroke-width="0.90"/><circle cx="10.00" cy="6.90" r="1.30" fill="#fff" stroke="#000" stroke-width="0.90"/><circle cx="20.00" cy="17.30" r="1.30" fill="#fff" stroke="#000" stroke-width="0.90"/></g>
<path d="M27.50 233.26 L27.50 238.86 L21.90 238.86 Z" fill="#777"/>
<g transform="translate(31.00 213.36)"><path d="M4.4 6.5C12 4 18.6 6 18.6 12.5C18.6 17.6 12 19.6 4.4 18.4" stroke="#333" stroke-width="0.9"/><rect x="2.40" y="5.10" width="2.80" height="2.80" fill="#fff" stroke="#000" stroke-width="1.00"/><rect x="16.70" y="2.00" width="2.80" height="2.80" fill="#fff" stroke="#000" stroke-width="1.00"/><rect x="2.40" y="17.00" width="2.80" height="2.80" fill="#fff" stroke="#000" stroke-width="1.00"/><rect x="18.70" y="19.30" width="2.80" height="2.80" fill="#fff" stroke="#000" stroke-width="1.00"/></g>
<path d="M56.00 233.26 L56.00 238.86 L50.40 238.86 Z" fill="#777"/>
<g transform="translate(2.50 241.42)"><circle cx="12.5" cy="12.3" r="9.7" stroke="#555" stroke-width="0.9"/><path d="M12.9 12.3L19 6.2" stroke="#000" stroke-width="1.1"/><circle cx="12.90" cy="12.30" r="1.20" fill="#fff" stroke="#000" stroke-width="0.90"/><circle cx="19.00" cy="6.20" r="1.20" fill="#fff" stroke="#000" stroke-width="0.90"/></g>
<path d="M27.50 261.32 L27.50 266.92 L21.90 266.92 Z" fill="#777"/>
<g transform="translate(31.00 241.42)"><ellipse cx="12.3" cy="12.4" rx="10" ry="6.9" stroke="#555" stroke-width="0.9"/><path d="M12 5.5V12.4H21" stroke="#555" stroke-width="0.8"/><rect x="10.60" y="4.00" width="2.80" height="2.80" fill="#fff" stroke="#000" stroke-width="1.00"/><rect x="10.60" y="11.00" width="2.80" height="2.80" fill="#fff" stroke="#000" stroke-width="1.00"/><rect x="19.80" y="11.00" width="2.80" height="2.80" fill="#fff" stroke="#000" stroke-width="1.00"/></g>
<path d="M56.00 261.32 L56.00 266.92 L50.40 266.92 Z" fill="#777"/>
<g transform="translate(2.50 269.48)"><path d="M6 4.1V20.6L20.9 12.7" stroke="#333" stroke-width="0.9"/><path d="M6 4.1C13 4.6 18.6 8 20.9 12.7" stroke="#000" stroke-width="1.1"/><circle cx="6.00" cy="4.10" r="1.30" fill="#fff" stroke="#000" stroke-width="0.90"/><circle cx="20.90" cy="12.70" r="1.30" fill="#fff" stroke="#000" stroke-width="0.90"/><circle cx="6.00" cy="20.60" r="1.30" fill="#fff" stroke="#000" stroke-width="0.90"/></g>
<path d="M27.50 289.38 L27.50 294.98 L21.90 294.98 Z" fill="#777"/>
<g transform="translate(31.00 269.48)"><rect x="3.5" y="7.3" width="17.3" height="10.6" stroke="#222" stroke-width="1"/><circle cx="20.80" cy="7.30" r="1.20" fill="#fff" stroke="#000" stroke-width="0.90"/><circle cx="3.50" cy="17.90" r="1.20" fill="#fff" stroke="#000" stroke-width="0.90"/></g>
<path d="M56.00 289.38 L56.00 294.98 L50.40 294.98 Z" fill="#777"/>
<g transform="translate(2.50 297.54)"><path d="M4 12L8 5H16L20 12L16 19H8Z" stroke="#555" stroke-width="0.9"/><path d="M12 12H20" stroke="#000" stroke-width="1"/><circle cx="12.00" cy="12.00" r="1.20" fill="#fff" stroke="#000" stroke-width="0.90"/><circle cx="20.20" cy="12.00" r="1.10" fill="#fff" stroke="#000" stroke-width="0.90"/></g>
<path d="M27.50 317.44 L27.50 323.04 L21.90 323.04 Z" fill="#777"/>
<g transform="translate(31.00 297.54)"><path d="M5 5.6H19.8V19" stroke="#aaa" stroke-width="0.8"/><path d="M4 5.6C14 5.2 19.8 9.4 19.8 20" stroke="#000" stroke-width="1.8"/><rect x="2.30" y="4.10" width="3.00" height="3.00" fill="#fff" stroke="#000" stroke-width="1.00"/><rect x="18.30" y="19.10" width="3.00" height="3.00" fill="#fff" stroke="#000" stroke-width="1.00"/></g>
<path d="M56.00 317.44 L56.00 323.04 L50.40 323.04 Z" fill="#777"/>
<g transform="translate(2.50 325.60)"><path d="M8.4 4.6L20.4 4.6L15.2 20.6L4.3 15.5Z" fill="url(#gb)" stroke="#1a2470" stroke-width="0.8"/><path d="M14.4 4.6L9.6 18M6.4 10L18 12" stroke="#1a2470" stroke-width="0.8"/><rect x="6.90" y="3.10" width="3.00" height="3.00" fill="#fff" stroke="#000" stroke-width="1.00"/><rect x="18.90" y="3.10" width="3.00" height="3.00" fill="#fff" stroke="#000" stroke-width="1.00"/><rect x="2.80" y="14.00" width="3.00" height="3.00" fill="#fff" stroke="#000" stroke-width="1.00"/><rect x="13.70" y="19.10" width="3.00" height="3.00" fill="#fff" stroke="#000" stroke-width="1.00"/></g>
<path d="M27.50 345.50 L27.50 351.10 L21.90 351.10 Z" fill="#777"/>
<g transform="translate(31.00 325.60)"><path d="M3.4 7.4L10.4 2.6C17 4.4 20.6 8 21 14L14.6 21.6C14.4 14 10.6 9.6 3.4 7.4Z" fill="url(#gb2)" stroke="#222" stroke-width="0.9" stroke-linejoin="round"/><path d="M3.4 7.4L10.4 2.6C12.6 3.2 14.4 4 15.8 5L9 10C7.4 8.8 5.6 8 3.4 7.4Z" fill="#fff" stroke="#222" stroke-width="0.8"/><path d="M14.4 17L20.8 10.6C21 11.6 21 12.8 21 14L14.6 21.6C14.6 20 14.6 18.4 14.4 17Z" fill="#fff" stroke="#222" stroke-width="0.8"/></g>
<path d="M56.00 345.50 L56.00 351.10 L50.40 351.10 Z" fill="#777"/>
<g transform="translate(2.50 353.66)"><path d="M3.6 8L12.6 4.6L20.6 7.6V17.6L11.6 21.6L3.6 18.4Z" fill="#6a84f2" stroke="#1a2470" stroke-width="0.9" stroke-linejoin="round"/><path d="M3.6 8L12.6 4.6L20.6 7.6L11.6 11.2Z" fill="#a9b7ff" stroke="#1a2470" stroke-width="0.8"/><path d="M11.6 11.2V21.6L20.6 17.6V7.6Z" fill="#4f68de" stroke="#1a2470" stroke-width="0.8"/></g>
<path d="M27.50 373.56 L27.50 379.16 L21.90 379.16 Z" fill="#777"/>
<g transform="translate(31.00 353.66)"><circle cx="8.60" cy="15.60" r="6.60" fill="url(#gbl)" stroke="#111a5a" stroke-width="1"/><path d="M3.65 11.31Q9.26 14.94 9.92 22.07M2.13 16.59Q8.60 18.90 14.54 12.96" stroke="#111a5a" stroke-width="0.8"/><circle cx="15.60" cy="8.60" r="6.60" fill="url(#gbl)" stroke="#111a5a" stroke-width="1"/><path d="M10.65 4.31Q16.26 7.94 16.92 15.07M9.13 9.59Q15.60 11.90 21.54 5.96" stroke="#111a5a" stroke-width="0.8"/></g>
<path d="M56.00 373.56 L56.00 379.16 L50.40 379.16 Z" fill="#777"/>
<g transform="translate(2.50 381.72)"><ellipse cx="12.6" cy="5" rx="5.2" ry="2.4" fill="#fff" stroke="#333" stroke-width="0.9"/><path d="M2.4 10.6C9 13.6 17 13.4 23 10.2V19.6C17 22.8 9 23 2.4 20Z" fill="#5a72e8" stroke="#1a2470" stroke-width="0.9"/><ellipse cx="12.6" cy="18" rx="5.6" ry="2.6" fill="#aebcff" stroke="#fff" stroke-width="1.6"/></g>
<path d="M27.50 401.62 L27.50 407.22 L21.90 407.22 Z" fill="#777"/>
<g transform="translate(31.00 381.72)"><path d="M8.6 3.4C12 6.6 17 4.4 22.2 6.4L16 20C13 22 8.6 18 3 19.6Z" fill="url(#gb)" stroke="#1a2470" stroke-width="0.9" stroke-linejoin="round"/><path d="M13.4 5.2L8 19M17.8 5.2L12.6 20.4M6.8 8.6C10 11 15 9 20 11M4.8 14C8.6 16 13 14 18 16" stroke="#1a2470" stroke-width="0.8"/></g>
<path d="M56.00 401.62 L56.00 407.22 L50.40 407.22 Z" fill="#777"/>
<g transform="translate(2.50 409.78)"><path d="M4 7.4L7.4 6.2C6.6 3.6 9.6 2.6 10.2 5L13.4 3.8L14.6 7C17 6 18 9 15.6 9.8L16.6 12.6L13.6 13.8C14.2 16 11.4 17 10.6 14.8L7.4 16L6.2 12.8C3.6 13.6 2.8 10.8 5 10Z" fill="#ffa800" stroke="#7a4a00" stroke-width="0.9" stroke-linejoin="round"/><path d="M10.8 14.6L14 13.4C13.4 11 16.2 10.2 17 12.4L20 11.2L21.2 14.4C23.6 13.6 24.4 16.4 22.2 17.2L23.2 20L20.2 21.2C20.8 23.4 18 24.2 17.2 22.2L14 23.4L12.8 20.2C10.4 21 9.6 18.2 11.8 17.4Z" fill="#fff" stroke="#555" stroke-width="0.9" stroke-linejoin="round"/></g>
<g transform="translate(31.00 409.78)"><path d="M3.4 24V6L9 15.4L19.6 3.4L15.2 15.8L23.4 17.4L15 20L17.6 24Z" fill="url(#go)" stroke="#e08000" stroke-width="0.5"/><path d="M3.4 24V6L9 15.4L19.6 3.4L12 17Z" fill="#ffb400" opacity="0.6"/></g>
<g transform="translate(2.50 437.84)"><rect x="3.4" y="10.4" width="10.6" height="4.6" fill="#fff" stroke="#000" stroke-width="1.1"/><path d="M14 12.8L17.6 10.4L22 15.6L18 20Z" fill="#fff" stroke="#444" stroke-width="0.9"/><path d="M13.8 3.4H19.6L14.6 13.4H13.8Z" fill="#1c2c8c"/></g>
<g transform="translate(31.00 437.84)"><rect x="3" y="11.2" width="18.4" height="4.8" fill="#fff" stroke="#000" stroke-width="1.1"/><path d="M13.6 4.4H19.6L14.4 16H13.6Z" fill="#1c2c8c"/></g>
<g transform="translate(2.50 465.90)"><g transform="translate(12 12.4) scale(0.84) translate(-12.3 -10.5)"><path d="M12.4 2.6A4.6 4.6 0 0 1 16.6 9A4.6 4.6 0 1 1 12.2 16.4A4.6 4.6 0 1 1 8 9.2A4.6 4.6 0 0 1 12.4 2.6Z" fill="#000" stroke="#000" stroke-width="2.2"/><circle cx="12.4" cy="7.4" r="3.6" fill="#a49cf4"/><circle cx="8.6" cy="13.4" r="3.5" fill="#fff"/><circle cx="16" cy="13.4" r="3.5" fill="#1a1a8a"/></g></g>
<path d="M27.50 485.80 L27.50 491.40 L21.90 491.40 Z" fill="#777"/>
<g transform="translate(31.00 465.90)"><circle cx="12.2" cy="6.2" r="3.6" fill="#a49cf4" stroke="#555" stroke-width="0.7"/><circle cx="6.8" cy="14.8" r="3.6" fill="#fff" stroke="#333" stroke-width="0.9"/><circle cx="17.4" cy="14.6" r="3.7" fill="#1a1a8a"/></g>
<g transform="translate(2.50 493.96)"><path d="M2.6 6.2C12 5 17.6 10 18 21.4" stroke="#000" stroke-width="1.6"/><rect x="6.20" y="4.60" width="2.80" height="2.80" fill="#fff" stroke="#000" stroke-width="1.00"/><rect x="16.20" y="14.80" width="2.80" height="2.80" fill="#fff" stroke="#000" stroke-width="1.00"/></g>
<g transform="translate(31.00 493.96)"><path d="M1.8 6.6C10.6 5.6 16.6 10.6 17.2 21.4" stroke="#000" stroke-width="1.8"/><path d="M1.6 2.4C14 1.8 21 8 21.6 21.6" stroke="#000" stroke-width="1.2" stroke-dasharray="1.3 1.3"/><rect x="8.00" y="0.60" width="2.80" height="2.80" fill="#fff" stroke="#000" stroke-width="1.00"/><rect x="20.20" y="12.60" width="2.80" height="2.80" fill="#fff" stroke="#000" stroke-width="1.00"/></g>
<path d="M56.00 513.86 L56.00 519.46 L50.40 519.46 Z" fill="#777"/>
<g transform="translate(2.50 522.02)"><path d="M4 3.6L20 5.6V10.2L17.6 9.8L16.6 8H14.4V19.6L16.6 21.2V22.4L8.4 21.4V20.2L10.4 19.4V7.4L7.8 7L6.2 9L4 8.6Z" fill="url(#gb2)" stroke="#1a2470" stroke-width="0.9" stroke-linejoin="round"/><path d="M4 3.6L6 2.4L21.4 4.4L20 5.6Z" fill="#c4ceff" stroke="#1a2470" stroke-width="0.7"/></g>
<g transform="translate(31.00 522.02)"><rect x="3.4" y="14.4" width="6" height="6" fill="#fff" stroke="#222" stroke-width="1"/><rect x="15.2" y="2.6" width="6" height="6" fill="url(#gb)" stroke="#222" stroke-width="1"/><path d="M9.6 14.2L14 9.8M11.2 9.4L14.4 9.4L14.4 12.6" stroke="#222" stroke-width="1.1"/></g>
<path d="M56.00 541.92 L56.00 547.52 L50.40 547.52 Z" fill="#777"/>
<g transform="translate(2.50 550.08)"><rect x="3.8" y="1.6" width="5.4" height="5.4" fill="url(#gb)" stroke="#111" stroke-width="1"/><rect x="15.0" y="4.6" width="5.4" height="5.4" fill="url(#gb)" stroke="#111" stroke-width="1"/><rect x="11.6" y="8.0" width="5.4" height="5.4" fill="url(#gb)" stroke="#111" stroke-width="1"/><rect x="3.8" y="13.4" width="5.4" height="5.4" fill="#f0f0f0" stroke="#111" stroke-width="1"/><rect x="15.6" y="15.4" width="5.4" height="5.4" fill="url(#gb)" stroke="#111" stroke-width="1"/></g>
<g transform="translate(31.00 550.08)"><rect x="3.2" y="2.6" width="4.8" height="13.4" fill="#fff" stroke="#111" stroke-width="1.1"/><path d="M11.4 18.6L20.6 7.6L24 10.6L14.8 21.4Z" fill="url(#gb)" stroke="#1a2470" stroke-width="0.9"/><path d="M8.6 4.4C12.6 4.2 15.4 5.6 16.6 8.4M13.8 7.8L16.8 8.8L17.4 5.6" stroke="#111" stroke-width="1"/></g>
<g transform="translate(2.50 578.14)"><path d="M2.8 7.4L12.6 3.4L22 6.8V17L12 22.4L2.8 18.6Z" fill="#6f86ee" stroke="#1a2470" stroke-width="0.9" stroke-linejoin="round"/><path d="M2.8 7.4L12.6 3.4L22 6.8L12 11Z" fill="#a9b7ff" stroke="#1a2470" stroke-width="0.7"/><path d="M12 11V22.4L22 17V6.8Z" fill="#3e56d4"/><path d="M9.4 16.4L13.4 14.6L18 16.2V20L13.8 22L9.4 20.6Z" fill="#fff" stroke="#222" stroke-width="0.8"/><path d="M9.4 16.4L13.8 18V22M13.8 18L18 16.2" stroke="#222" stroke-width="0.7"/></g>
<path d="M27.50 598.04 L27.50 603.64 L21.90 603.64 Z" fill="#777"/>
<g transform="translate(31.00 578.14)"><path d="M5.6 14.6H23.4L19 19.6H1Z" fill="#5a74ea" stroke="#1a2470" stroke-width="1"/><path d="M7.2 17V7.6" stroke="#fff" stroke-width="1.8"/><path d="M4.8 7.8L7.2 3.4L9.6 7.8Z" fill="#fff"/><path d="M12.8 17V7.6" stroke="#fff" stroke-width="1.8"/><path d="M10.4 7.8L12.8 3.4L15.2 7.8Z" fill="#fff"/><path d="M18.4 17V7.6" stroke="#fff" stroke-width="1.8"/><path d="M16.0 7.8L18.4 3.4L20.8 7.8Z" fill="#fff"/></g>
<path d="M56.00 598.04 L56.00 603.64 L50.40 603.64 Z" fill="#777"/>
<g transform="translate(2.50 606.20)"><rect x="3.2" y="3.4" width="4.2" height="4.2" fill="#8fa0f6" stroke="#000" stroke-width="1.1"/><rect x="10.3" y="3.4" width="4.2" height="4.2" fill="#8fa0f6" stroke="#000" stroke-width="1.1"/><rect x="17.4" y="3.4" width="4.2" height="4.2" fill="#8fa0f6" stroke="#000" stroke-width="1.1"/><rect x="3.2" y="10.5" width="4.2" height="4.2" fill="#8fa0f6" stroke="#000" stroke-width="1.1"/><rect x="10.3" y="10.5" width="4.2" height="4.2" fill="#8fa0f6" stroke="#000" stroke-width="1.1"/><rect x="17.4" y="10.5" width="4.2" height="4.2" fill="#8fa0f6" stroke="#000" stroke-width="1.1"/><rect x="3.2" y="17.6" width="4.2" height="4.2" fill="#fff" stroke="#000" stroke-width="1.1"/><rect x="10.3" y="17.6" width="4.2" height="4.2" fill="#8fa0f6" stroke="#000" stroke-width="1.1"/><rect x="17.4" y="17.6" width="4.2" height="4.2" fill="#8fa0f6" stroke="#000" stroke-width="1.1"/></g>
<path d="M27.50 626.10 L27.50 631.70 L21.90 631.70 Z" fill="#777"/>
<g transform="translate(31.00 606.20)"><rect x="7.6" y="3" width="9.2" height="4.8" fill="#f2f2f2" stroke="#111" stroke-width="1.1"/><rect x="9.2" y="10" width="6" height="3.6" fill="#f2f2f2" stroke="#111" stroke-width="1.1"/><rect x="8.4" y="15.8" width="7.6" height="6" fill="#f2f2f2" stroke="#111" stroke-width="1.1"/><path d="M12.2 1.6V23" stroke="#d01818" stroke-width="1.5"/></g>
<path d="M56.00 626.10 L56.00 631.70 L50.40 631.70 Z" fill="#777"/>
<g transform="translate(2.50 634.26)"><path d="M3 5.6L7.4 4L11.2 5.4L9.8 19.6L5.6 18Z" fill="#f0f0f0" stroke="#222" stroke-width="0.9"/><path d="M10.8 2.4L14.6 4.8L12 16L9.8 14Z" fill="#fff" stroke="#222" stroke-width="0.8"/><path d="M14.4 5.4L20.8 7.6L15 21.6L8.6 19.4Z" fill="url(#gb2)" stroke="#1a2470" stroke-width="0.9"/><path d="M14.4 5.4L16.4 4L22.4 6.2L20.8 7.6Z" fill="#c4ceff" stroke="#1a2470" stroke-width="0.7"/></g>
<path d="M27.50 654.16 L27.50 659.76 L21.90 659.76 Z" fill="#777"/>
<g transform="translate(31.00 634.26)"><path d="M3.4 14.2L6.4 12.4L9.6 17.2C12.6 11 16.4 6.4 21.8 2.4C17 8 13.4 14 10.6 21.6H8.6Z" fill="#000"/></g>
<path d="M56.00 654.16 L56.00 659.76 L50.40 659.76 Z" fill="#777"/>
<g transform="translate(2.50 662.32)"><path d="M3 6.4L9.6 3.6L15 5.6V14.4L8.4 17.4L3 15.2Z" fill="#b8b8b8" stroke="#333" stroke-width="0.8"/><path d="M3 6.4L8.4 8.4L15 5.6M8.4 8.4V17.4" stroke="#333" stroke-width="0.7"/><path d="M8.4 8.4L15 5.6V14.4L8.4 17.4Z" fill="#8a8a8a"/><path d="M16.6 5.4L22.4 18.6C21 21 14 21 12.4 18.6Z" fill="url(#ggray)" stroke="#333" stroke-width="0.8"/></g>
<path d="M27.50 682.22 L27.50 687.82 L21.90 687.82 Z" fill="#777"/>
<g transform="translate(31.00 662.32)"><path d="M12.6 7.4L22.6 17.2L13.6 23L3 17.6Z" fill="#ffc24a" stroke="#8a5a00" stroke-width="0.8" stroke-linejoin="round"/><path d="M12.6 7.4L13.6 23L22.6 17.2Z" fill="#e08a10"/><path d="M9.6 4.4L13.6 0.8L20.4 0.4V4.2L15 6.4L12 8Z" fill="#ccc" stroke="#555" stroke-width="0.7"/><path d="M10.4 5.6L14 2.4M11.6 6.6L15.4 3.4M13 7.2L16.6 4.4" stroke="#444" stroke-width="0.7"/><rect x="20.6" y="0" width="2" height="4.8" fill="#000"/></g>
<path d="M56.00 682.22 L56.00 687.82 L50.40 687.82 Z" fill="#777"/>
<path d="M1555.83 188.10L1558.42 188.44L1557.20 192.67L1555.91 192.50Z" fill="hsl(30,100%,50%)"/><path d="M1558.08 188.35L1560.50 189.35L1558.22 193.12L1557.03 192.63Z" fill="hsl(45,100%,50%)"/><path d="M1560.20 189.18L1562.27 190.77L1559.10 193.82L1558.08 193.03Z" fill="hsl(60,100%,50%)"/><path d="M1562.03 190.53L1563.62 192.60L1559.77 194.72L1558.98 193.70Z" fill="hsl(75,100%,50%)"/><path d="M1563.45 192.30L1564.45 194.72L1560.17 195.77L1559.68 194.58Z" fill="hsl(90,100%,50%)"/><path d="M1564.36 194.38L1564.70 196.97L1560.30 196.89L1560.13 195.60Z" fill="hsl(105,100%,50%)"/><path d="M1564.70 196.63L1564.36 199.22L1560.13 198.00L1560.30 196.71Z" fill="hsl(120,100%,50%)"/><path d="M1564.45 198.88L1563.45 201.30L1559.68 199.02L1560.17 197.83Z" fill="hsl(135,100%,50%)"/><path d="M1563.62 201.00L1562.03 203.07L1558.98 199.90L1559.77 198.88Z" fill="hsl(150,100%,50%)"/><path d="M1562.27 202.83L1560.20 204.42L1558.08 200.57L1559.10 199.78Z" fill="hsl(165,100%,50%)"/><path d="M1560.50 204.25L1558.08 205.25L1557.03 200.97L1558.22 200.48Z" fill="hsl(180,100%,50%)"/><path d="M1558.42 205.16L1555.83 205.50L1555.91 201.10L1557.20 200.93Z" fill="hsl(195,100%,50%)"/><path d="M1556.17 205.50L1553.58 205.16L1554.80 200.93L1556.09 201.10Z" fill="hsl(210,100%,50%)"/><path d="M1553.92 205.25L1551.50 204.25L1553.78 200.48L1554.97 200.97Z" fill="hsl(225,100%,50%)"/><path d="M1551.80 204.42L1549.73 202.83L1552.90 199.78L1553.92 200.57Z" fill="hsl(240,100%,50%)"/><path d="M1549.97 203.07L1548.38 201.00L1552.23 198.88L1553.02 199.90Z" fill="hsl(255,100%,50%)"/><path d="M1548.55 201.30L1547.55 198.88L1551.83 197.83L1552.32 199.02Z" fill="hsl(270,100%,50%)"/><path d="M1547.64 199.22L1547.30 196.63L1551.70 196.71L1551.87 198.00Z" fill="hsl(285,100%,50%)"/><path d="M1547.30 196.97L1547.64 194.38L1551.87 195.60L1551.70 196.89Z" fill="hsl(300,100%,50%)"/><path d="M1547.55 194.72L1548.55 192.30L1552.32 194.58L1551.83 195.77Z" fill="hsl(315,100%,50%)"/><path d="M1548.38 192.60L1549.97 190.53L1553.02 193.70L1552.23 194.72Z" fill="hsl(330,100%,50%)"/><path d="M1549.73 190.77L1551.80 189.18L1553.92 193.03L1552.90 193.82Z" fill="hsl(345,100%,50%)"/><path d="M1551.50 189.35L1553.92 188.35L1554.97 192.63L1553.78 193.12Z" fill="hsl(0,100%,50%)"/><path d="M1553.58 188.44L1556.17 188.10L1556.09 192.50L1554.80 192.67Z" fill="hsl(15,100%,50%)"/><circle cx="1556.00" cy="196.80" r="8.70" stroke="#1a1a1a" stroke-width="1.1"/><circle cx="1556.00" cy="196.80" r="4.30" fill="#fff" stroke="#1a1a1a" stroke-width="0.9"/>
<g transform="translate(1603.8 187)"><path d="M0.60 4.40L9.00 11.40L18.80 5.60L18.80 7.35L9.00 13.35L0.60 5.86Z" fill="#e8201c"/><path d="M0.60 6.35L9.00 13.35L18.80 7.35L18.80 9.11L9.00 15.30L0.60 7.33Z" fill="#ffffff"/><path d="M0.60 8.30L9.00 15.30L18.80 9.11L18.80 10.86L9.00 17.25L0.60 8.79Z" fill="#2a3cc0"/><path d="M0.60 10.25L9.00 17.25L18.80 10.86L18.80 12.62L9.00 19.20L0.60 10.25Z" fill="#ffffff"/><path d="M0.60 0.80L18.80 5.60L9.00 11.40L0.60 4.40Z" fill="#ff6a24"/><path d="M0.60 0.80L18.80 5.60L18.80 12.62L9.00 19.20L0.60 10.25Z" stroke="#1a1a3a" stroke-width="0.90" stroke-linejoin="round"/><path d="M9.00 11.40V19.20" stroke="#1a1a3a" stroke-width="0.6"/></g>
<ellipse cx="1672" cy="204.6" rx="8" ry="1.6" fill="#000" opacity="0.3"/><circle cx="1670.4" cy="197.4" r="7.9" fill="url(#gbs)"/><ellipse cx="1667.6" cy="193.6" rx="2.2" ry="1.5" fill="#fff" opacity="0.85" transform="rotate(-30 1667.6 193.6)"/><path d="M1672.4 191.6L1676.6 188.4L1675.6 187L1681 186.6L1680.6 192L1679.2 190.8L1675 194Z" fill="#fff" stroke="#333" stroke-width="0.7"/>
<g transform="translate(1723 188)"><path d="M1 13L9.6 3.4L14.4 1L15.6 4.2L7.4 15.6L4.2 18Z" fill="#fff" stroke="#111" stroke-width="1.2" stroke-linejoin="round"/><path d="M8 5.2L12.4 2.2L14.8 5.4L11.6 9.8Z" fill="#f0521c"/><path d="M1 13L4.2 18" stroke="#111" stroke-width="1.4"/><path d="M13.6 1.4L15.8 0.4" stroke="#111" stroke-width="1.6"/></g>
<g transform="translate(1780.4 189.6) scale(0.86)"><path d="M1 15.4V2.6Q1 1.4 2.2 1.4H6.6L8.2 3.6H15.6Q16.4 3.6 16.4 4.6V6.2" fill="#f5cc3c" stroke="#3a2c00" stroke-width="1.3"/><path d="M1 15.6L5.2 6H21.2L17 15.6Z" fill="url(#gf)" stroke="#3a2c00" stroke-width="1.3" stroke-linejoin="round"/></g>
<rect x="1840.4" y="188.5" width="17.2" height="17.2" fill="#fff" stroke="#111" stroke-width="1.4"/><rect x="1841.2" y="189.3" width="15.6" height="1.8" fill="#6a5acd"/><path d="M1842.2 204.8V200.4A6.8 6.8 0 0 1 1855.8 200.4V204.8Z" fill="url(#ghelp)"/><text x="1849" y="204.6" font-size="13" font-weight="700" fill="#fff" text-anchor="middle" font-family="Liberation Serif, serif">?</text>
<g transform="translate(1549.6 217.6)"><path d="M0.6 8.6C0.6 6 2 5 4 4.6L5.6 2.2C6 1.2 7 0.6 8.4 0.6H15.6C17 0.6 18 1.2 18.6 2.2L19.6 4.4H22.6C24.4 4.4 25.2 5.4 25.2 7V16.6C25.2 18.4 24.2 19.4 22.4 19.4H3.4C1.6 19.4 0.6 18.4 0.6 16.6Z" fill="#3a3c40" stroke="#1a1a1a" stroke-width="0.8"/><path d="M2 8H7M19 6.4H24" stroke="#6a6c70" stroke-width="1"/><circle cx="13.4" cy="12" r="7" fill="#2a2c30" stroke="#c8c8c8" stroke-width="1"/><circle cx="13.4" cy="12" r="4.6" fill="#1a2230" stroke="#555" stroke-width="0.8"/><path d="M11 14.6A3.6 3.6 0 0 0 16.6 13.6" stroke="#3a9a4a" stroke-width="1.4"/><circle cx="12" cy="10.4" r="1.1" fill="#4a6ab0"/></g>
<rect x="1583.9" y="215.3" width="28" height="25" fill="#c8c8c8" stroke="#111" stroke-width="1.5"/><rect x="1587" y="218.3" width="21.8" height="19" fill="#fff" stroke="#4ab4e6" stroke-width="1.4"/><rect x="1589.2" y="220.4" width="17.4" height="14.8" fill="#fff" stroke="#ee3c3c" stroke-width="1.4"/>
</svg>
<!-- text -->
<span class="t" style="left:26.93px;top:7.00px;font-size:15.4px;color:#e4e7ee;transform:scaleX(0.9717);">PhoneHolder - Rhinoceros 6 Commercial - [Top]</span>
<span class="t" style="left:6.94px;top:34.00px;font-size:15px;color:#454c5e;transform:scaleX(0.9594);">File</span>
<span class="t" style="left:43.83px;top:34.00px;font-size:15px;color:#454c5e;transform:scaleX(0.9735);">Edit</span>
<span class="t" style="left:84.40px;top:34.00px;font-size:15px;color:#454c5e;transform:scaleX(0.9658);">View</span>
<span class="t" style="left:130.70px;top:34.00px;font-size:15px;color:#454c5e;transform:scaleX(0.9100);">Curve</span>
<span class="t" style="left:181.80px;top:34.00px;font-size:15px;color:#454c5e;transform:scaleX(0.9250);">Surface</span>
<span class="t" style="left:244.50px;top:34.00px;font-size:15px;color:#454c5e;transform:scaleX(0.9905);">Solid</span>
<span class="t" style="left:291.95px;top:34.00px;font-size:15px;color:#454c5e;transform:scaleX(0.9537);">Mesh</span>
<span class="t" style="left:340.99px;top:34.00px;font-size:15px;color:#454c5e;transform:scaleX(1.0069);">Dimension</span>
<span class="t" style="left:426.60px;top:34.00px;font-size:15px;color:#454c5e;transform:scaleX(0.9689);">Transform</span>
<span class="t" style="left:506.70px;top:34.00px;font-size:15px;color:#454c5e;transform:scaleX(0.9908);">Tools</span>
<span class="t" style="left:555.30px;top:34.00px;font-size:15px;color:#454c5e;transform:scaleX(0.9732);">Analyze</span>
<span class="t" style="left:620.74px;top:34.00px;font-size:15px;color:#454c5e;transform:scaleX(0.9605);">Render</span>
<span class="t" style="left:681.48px;top:34.00px;font-size:15px;color:#454c5e;transform:scaleX(0.9174);">Panels</span>
<span class="t" style="left:736.96px;top:34.00px;font-size:15px;color:#454c5e;transform:scaleX(1.0404);">Help</span>
<span class="t" style="left:10.30px;top:63.00px;font-size:15px;color:#454c5e;transform:scaleX(0.9886);">9 curves added to selection.</span>
<span class="t" style="left:10.60px;top:84.00px;font-size:15px;color:#454c5e;transform:scaleX(0.9749);font-weight:700;">Command:</span>
<span class="t" style="left:23.30px;top:117.00px;font-size:15px;color:#15151a;transform:scaleX(0.9911);">Standard</span>
<span class="t" style="left:113.00px;top:117.00px;font-size:15px;color:#15151a;transform:scaleX(0.9253);">CPlanes</span>
<span class="t" style="left:195.50px;top:117.00px;font-size:15px;color:#15151a;transform:scaleX(0.9443);">Set View</span>
<span class="t" style="left:281.51px;top:117.00px;font-size:15px;color:#15151a;transform:scaleX(0.9922);">Display</span>
<span class="t" style="left:361.30px;top:117.00px;font-size:15px;color:#15151a;transform:scaleX(0.9289);">Select</span>
<span class="t" style="left:430.00px;top:117.00px;font-size:15px;color:#15151a;transform:scaleX(1.0058);">Viewport Layout</span>
<span class="t" style="left:569.50px;top:117.00px;font-size:15px;color:#15151a;transform:scaleX(1.0201);">Visibility</span>
<span class="t" style="left:653.75px;top:117.00px;font-size:15px;color:#15151a;transform:scaleX(1.0031);">Transform</span>
<span class="t" style="left:750.00px;top:117.00px;font-size:15px;color:#15151a;transform:scaleX(0.9911);">Curve Tools</span>
<span class="t" style="left:856.25px;top:117.00px;font-size:15px;color:#15151a;transform:scaleX(0.9958);">Surface Tools</span>
<span class="t" style="left:975.50px;top:117.00px;font-size:15px;color:#15151a;transform:scaleX(1.0238);">Solid Tools</span>
<span class="t" style="left:1075.96px;top:117.00px;font-size:15px;color:#15151a;transform:scaleX(1.0388);">Mesh Tools</span>
<span class="t" style="left:1180.24px;top:117.00px;font-size:15px;color:#15151a;transform:scaleX(1.0129);">Render Tools</span>
<span class="t" style="left:1297.69px;top:117.00px;font-size:15px;color:#15151a;transform:scaleX(1.0619);">Drafting</span>
<span class="t" style="left:1382.50px;top:117.00px;font-size:15px;color:#15151a;transform:scaleX(1.0012);">New in V6</span>
<span class="t" style="left:73.60px;top:178.00px;font-size:15px;color:#000;transform:scaleX(1.0148);font-weight:700;">Top</span>
<span class="t" style="left:112.60px;top:884.00px;font-size:17px;color:#6d7076;transform:scaleX(0.8444);">y</span>
<span class="t" style="left:149.20px;top:924.00px;font-size:17px;color:#6d7076;transform:scaleX(0.8444);">x</span>
<span class="t" style="left:77.23px;top:987.00px;font-size:15px;color:#15151a;transform:scaleX(0.9685);">Perspective</span>
<span class="t" style="left:174.70px;top:987.00px;font-size:15px;color:#15151a;transform:scaleX(1.0402);">Top</span>
<span class="t" style="left:221.62px;top:987.00px;font-size:15px;color:#15151a;transform:scaleX(0.9816);">Front</span>
<span class="t" style="left:276.17px;top:987.00px;font-size:15px;color:#15151a;transform:scaleX(1.0301);">Right</span>
<span class="t" style="left:7.30px;top:1012.00px;font-size:15px;color:#15151a;transform:scaleX(0.9047);">CPlane</span>
<span class="t" style="left:83.40px;top:1012.00px;font-size:15px;color:#15151a;transform:scaleX(0.9276);">x 260.312</span>
<span class="t" style="left:195.30px;top:1012.00px;font-size:15px;color:#15151a;transform:scaleX(0.9213);">y 15.045</span>
<span class="t" style="left:307.50px;top:1012.00px;font-size:15px;color:#15151a;transform:scaleX(0.9169);">z 0.000</span>
<span class="t" style="left:400.21px;top:1012.00px;font-size:15px;color:#15151a;transform:scaleX(1.0439);">Millimeters</span>
<span class="t" style="left:512.87px;top:1012.00px;font-size:15px;color:#15151a;transform:scaleX(0.8814);">DEFAULT</span>
<span class="t" style="left:706.25px;top:1012.00px;font-size:15px;color:#15151a;transform:scaleX(0.9439);font-weight:700;">Grid Snap</span>
<span class="t" style="left:789.25px;top:1012.00px;font-size:15px;color:#15151a;transform:scaleX(0.9954);">Ortho</span>
<span class="t" style="left:842.29px;top:1012.00px;font-size:15px;color:#15151a;transform:scaleX(0.9560);">Planar</span>
<span class="t" style="left:899.50px;top:1012.00px;font-size:15px;color:#15151a;transform:scaleX(0.9244);font-weight:700;">Osnap</span>
<span class="t" style="left:955.00px;top:1012.00px;font-size:15px;color:#15151a;transform:scaleX(0.9560);font-weight:700;">SmartTrack</span>
<span class="t" style="left:1046.25px;top:1012.00px;font-size:15px;color:#15151a;transform:scaleX(0.9693);font-weight:700;">Gumball</span>
<span class="t" style="left:1119.01px;top:1012.00px;font-size:15px;color:#15151a;transform:scaleX(0.9879);">Record History</span>
<span class="t" style="left:1232.74px;top:1012.00px;font-size:15px;color:#15151a;transform:scaleX(1.0050);">Filter</span>
<span class="t" style="left:1275.27px;top:1012.00px;font-size:15px;color:#15151a;transform:scaleX(0.9829);">Minutes from last save: 5</span>
<span class="t" style="left:1567.80px;top:190.00px;font-size:15px;color:#15151a;transform:scaleX(0.9997);">Pr...</span>
<span class="t" style="left:1625.96px;top:190.00px;font-size:15px;color:#15151a;transform:scaleX(0.9401);">La...</span>
<span class="t" style="left:1683.90px;top:190.00px;font-size:15px;color:#15151a;transform:scaleX(0.8980);">Re...</span>
<span class="t" style="left:1742.47px;top:190.00px;font-size:15px;color:#15151a;transform:scaleX(1.0337);">M...</span>
<span class="t" style="left:1801.52px;top:190.00px;font-size:15px;color:#15151a;transform:scaleX(0.9814);">Li...</span>
<span class="t" style="left:1860.85px;top:190.00px;font-size:15px;color:#15151a;transform:scaleX(0.9543);">H...</span>
<span class="t" style="left:1549.30px;top:258.00px;font-size:17.5px;color:#4a5366;transform:scaleX(1.0411);">Viewport</span>
<span class="t" style="left:1549.50px;top:394.00px;font-size:17.5px;color:#4a5366;transform:scaleX(0.9407);">Camera</span>
<span class="t" style="left:1549.30px;top:608.00px;font-size:17.5px;color:#4a5366;transform:scaleX(0.9759);">Target</span>
<span class="t" style="left:1549.30px;top:744.00px;font-size:17.5px;color:#4a5366;transform:scaleX(1.0012);">Wallpaper</span>
<span class="t" style="left:1573.60px;top:287.00px;font-size:15px;color:#3d4455;transform:scaleX(1.0205);">Title</span>
<span class="t" style="left:1733.30px;top:287.00px;font-size:15px;color:#3d4455;transform:scaleX(1.0066);">Top</span>
<span class="t" style="left:1573.60px;top:313.00px;font-size:15px;color:#9ea4b1;transform:scaleX(1.0289);">Width</span>
<span class="t" style="left:1732.31px;top:313.00px;font-size:15px;color:#9ea4b1;transform:scaleX(0.9867);">1468</span>
<span class="t" style="left:1572.58px;top:339.00px;font-size:15px;color:#9ea4b1;transform:scaleX(1.0210);">Height</span>
<span class="t" style="left:1733.30px;top:339.00px;font-size:15px;color:#9ea4b1;transform:scaleX(0.9358);">805</span>
<span class="t" style="left:1572.59px;top:365.00px;font-size:15px;color:#3d4455;transform:scaleX(1.0083);">Projection</span>
<span class="t" style="left:1731.43px;top:365.00px;font-size:15px;color:#3d4455;transform:scaleX(0.9653);">Parallel</span>
<span class="t" style="left:1572.65px;top:423.00px;font-size:15px;color:#9ea4b1;transform:scaleX(0.9455);">Lens Length</span>
<span class="t" style="left:1733.30px;top:423.00px;font-size:15px;color:#9ea4b1;transform:scaleX(0.9081);">50.0</span>
<span class="t" style="left:1572.57px;top:449.00px;font-size:15px;color:#3d4455;transform:scaleX(1.0289);">Rotation</span>
<span class="t" style="left:1733.30px;top:449.00px;font-size:15px;color:#3d4455;transform:scaleX(0.9081);">90.0</span>
<span class="t" style="left:1573.60px;top:475.00px;font-size:15px;color:#3d4455;transform:scaleX(0.9767);">X Location</span>
<span class="t" style="left:1733.30px;top:475.00px;font-size:15px;color:#3d4455;transform:scaleX(0.9311);">98.194</span>
<span class="t" style="left:1573.60px;top:501.00px;font-size:15px;color:#3d4455;transform:scaleX(0.9640);">Y Location</span>
<span class="t" style="left:1733.30px;top:501.00px;font-size:15px;color:#3d4455;transform:scaleX(0.9267);">35.856</span>
<span class="t" style="left:1573.60px;top:527.00px;font-size:15px;color:#3d4455;transform:scaleX(0.9885);">Z Location</span>
<span class="t" style="left:1733.30px;top:527.00px;font-size:15px;color:#3d4455;transform:scaleX(0.9311);">39.044</span>
<span class="t" style="left:1572.61px;top:553.00px;font-size:15px;color:#3d4455;transform:scaleX(0.9890);">Distance to Target</span>
<span class="t" style="left:1733.30px;top:553.00px;font-size:15px;color:#000;transform:scaleX(0.9311);">39.044</span>
<span class="t" style="left:1572.59px;top:579.00px;font-size:15px;color:#3d4455;transform:scaleX(1.0114);">Location</span>
<span class="t" style="left:1573.60px;top:636.00px;font-size:15px;color:#3d4455;transform:scaleX(0.9384);">X Target</span>
<span class="t" style="left:1733.30px;top:636.00px;font-size:15px;color:#3d4455;transform:scaleX(0.9311);">98.194</span>
<span class="t" style="left:1573.60px;top:662.00px;font-size:15px;color:#3d4455;transform:scaleX(0.9225);">Y Target</span>
<span class="t" style="left:1733.30px;top:662.00px;font-size:15px;color:#3d4455;transform:scaleX(0.9267);">35.856</span>
<span class="t" style="left:1573.60px;top:689.00px;font-size:15px;color:#3d4455;transform:scaleX(0.9525);">Z Target</span>
<span class="t" style="left:1733.30px;top:689.00px;font-size:15px;color:#3d4455;transform:scaleX(0.8923);">0.0</span>
<span class="t" style="left:1572.59px;top:715.00px;font-size:15px;color:#3d4455;transform:scaleX(1.0114);">Location</span>
<span class="t" style="left:1572.62px;top:773.00px;font-size:15px;color:#3d4455;transform:scaleX(0.9793);">Filename</span>
<span class="t" style="left:1731.60px;top:773.00px;font-size:15px;color:#3d4455;transform:scaleX(0.9616);">(none)</span>
<span class="t" style="left:1573.60px;top:799.00px;font-size:15px;color:#3d4455;transform:scaleX(0.9339);">Show</span>
<span class="t" style="left:1573.60px;top:825.00px;font-size:15px;color:#3d4455;transform:scaleX(0.8817);">Gray</span>
<span class="t" style="left:1798.50px;top:578.00px;font-size:15px;color:#3d4455;transform:scaleX(0.9006);">Place...</span>
<span class="t" style="left:1798.50px;top:715.00px;font-size:15px;color:#3d4455;transform:scaleX(0.9006);">Place...</span>
</body></html>
